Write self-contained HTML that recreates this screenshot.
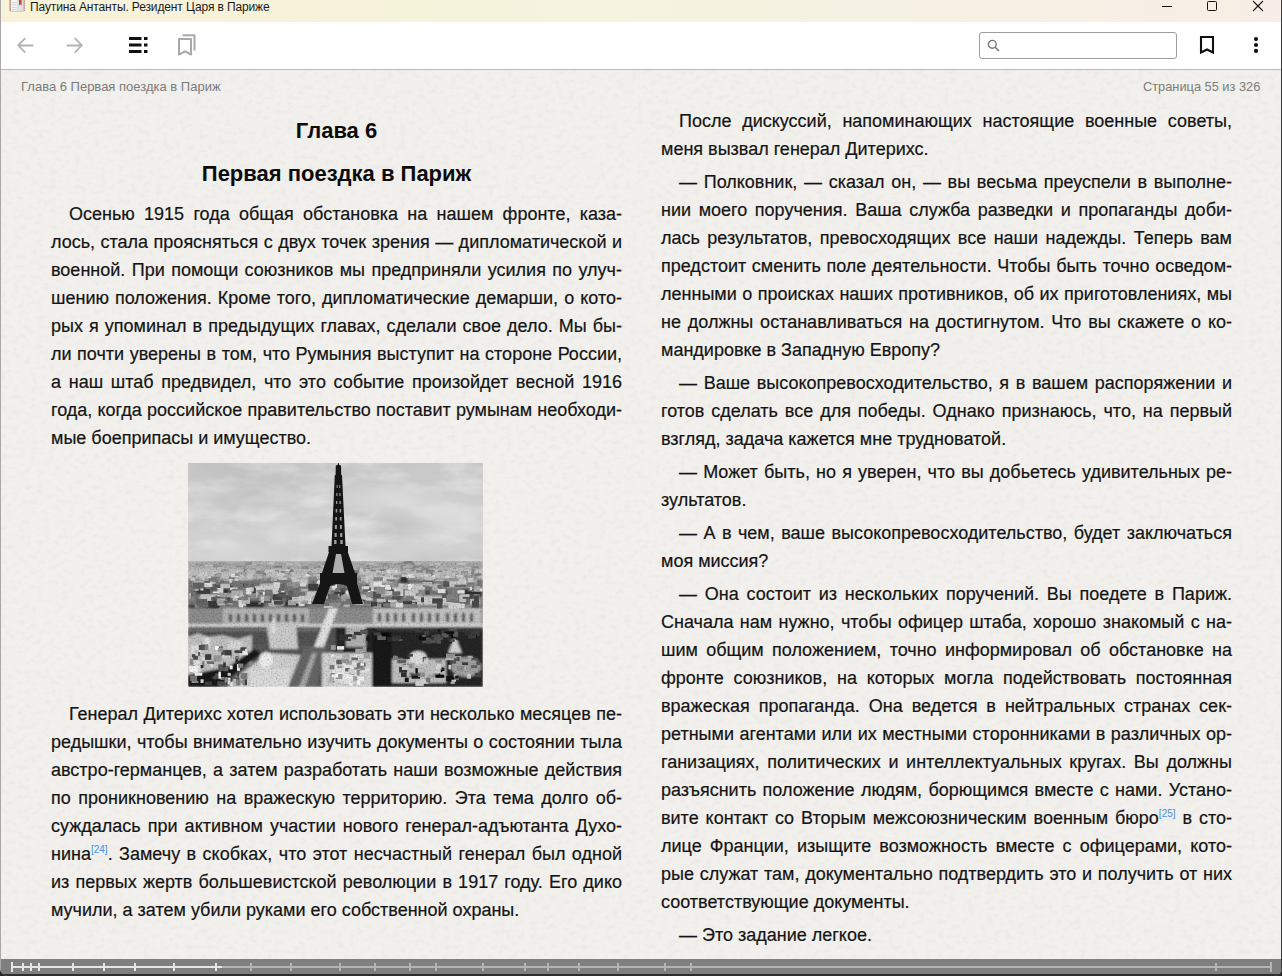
<!DOCTYPE html>
<html><head><meta charset="utf-8">
<style>
*{margin:0;padding:0;box-sizing:border-box}
html,body{width:1282px;height:976px;overflow:hidden;background:#2a2a2a}
body{position:relative;font-family:"Liberation Sans",sans-serif}
#win{position:absolute;left:0;top:0;width:1282px;height:976px;border-radius:0 0 8px 8px;overflow:hidden;background:#808080}
#title{position:absolute;left:0;top:0;width:1282px;height:22px;background:linear-gradient(to right,#f8f2d8 0%,#f6f3dc 35%,#f5f2e1 60%,#f7f0e5 85%,#f8eee7 100%)}
#title .t{position:absolute;left:30px;top:0;font-size:12px;letter-spacing:-0.13px;line-height:14px;color:#1a1a1a;white-space:pre}
#tool{position:absolute;left:0;top:22px;width:1282px;height:48px;background:#fff;border-bottom:1px solid #b9b9b9}
#content{position:absolute;left:0;top:70px;width:1282px;height:889px;background:#f2f0ec}
#bar{position:absolute;left:0;top:959px;width:1282px;height:15px;background:#7f7f7f}
#lb{position:absolute;left:0;top:0;width:1px;height:976px;background:#a9a9a9}
#rb{position:absolute;left:1281px;top:0;width:1px;height:976px;background:#3a3a3a}
.hdr{position:absolute;font-size:13px;line-height:15px;color:#7b7b7b;white-space:pre}
.l{position:absolute;font-size:18px;line-height:28px;height:28px;color:#141414;white-space:pre;-webkit-text-stroke:0.2px #141414}
.h{position:absolute;font-size:22px;font-weight:bold;line-height:28px;color:#0c0c0c;white-space:pre;left:51px;width:571px;text-align:center}
sup{font-size:10px;vertical-align:baseline;position:relative;top:-7.5px;color:#4a8ee0;-webkit-text-stroke:0}
svg{position:absolute;overflow:visible}
</style></head><body>
<div id="win">
<div id="title">
 <svg style="left:9px;top:0" width="17" height="13" viewBox="0 0 17 13">
  <path d="M0.5 -1 V10 Q0.5 12 2.5 12 H14 Q16 12 16 10 V-1Z" fill="#e9c2bc"/>
  <rect x="2" y="-1" width="6.5" height="12" fill="#f4f4f3"/>
  <rect x="8.5" y="-1" width="6" height="12" fill="#dfe1e1"/>
  <g fill="#c9cccc"><rect x="3" y="2" width="4.5" height="0.8"/><rect x="3" y="4.5" width="4.5" height="0.8"/><rect x="3" y="7" width="4.5" height="0.8"/><rect x="3" y="9.3" width="4.5" height="0.8"/></g>
  <path d="M10 -1 h2.6 v6.5 l-1.3 -1.2 l-1.3 1.2z" fill="#c4473b"/>
  <rect x="0.5" y="-1" width="1.5" height="12" fill="#c99a92"/>
  <rect x="14.5" y="-1" width="1.5" height="12" fill="#d2a59e"/>
 </svg>
 <div class="t">Паутина Антанты. Резидент Царя в Париже</div>
 <svg style="left:1162px;top:0" width="120" height="22">
  <line x1="0" y1="6.5" x2="10" y2="6.5" stroke="#111" stroke-width="1"/>
  <rect x="45.5" y="1.5" width="9" height="9" rx="1" fill="none" stroke="#111" stroke-width="1"/>
  <path d="M91 1 L101 11 M101 1 L91 11" stroke="#111" stroke-width="1.1"/>
 </svg>
</div>
<div id="tool">
 <svg style="left:17px;top:14.5px" width="17" height="17" viewBox="0 0 17 17">
  <path d="M16.3 8.5 H1.2 M8.3 1.2 L1.2 8.3 L8.3 15.6" fill="none" stroke="#b3b3b3" stroke-width="1.8"/>
 </svg>
 <svg style="left:65.5px;top:14.5px" width="17" height="17" viewBox="0 0 17 17">
  <path d="M0.7 8.5 H15.8 M8.7 1.2 L15.8 8.3 L8.7 15.6" fill="none" stroke="#b3b3b3" stroke-width="1.8"/>
 </svg>
 <svg style="left:129px;top:15px" width="20" height="17" viewBox="0 0 20 17">
  <rect x="0" y="0" width="12.5" height="3" fill="#111"/>
  <rect x="0" y="6.5" width="12.5" height="3" fill="#111"/>
  <rect x="0" y="13" width="12.5" height="3" fill="#111"/>
  <rect x="15" y="0" width="3.5" height="3" fill="#111"/>
  <rect x="15" y="6.5" width="3.5" height="3" fill="#111"/>
  <rect x="15" y="13" width="3.5" height="3" fill="#111"/>
 </svg>
 <svg style="left:177px;top:11px" width="22" height="23" viewBox="0 0 22 23">
  <path d="M2 6 H14 V21.5 L8 18.3 L2 21.5 Z" fill="none" stroke="#a9a9a9" stroke-width="2" stroke-linejoin="round"/>
  <path d="M5.5 2.2 H17.5 V17.5" fill="none" stroke="#a9a9a9" stroke-width="2" stroke-linejoin="round"/>
 </svg>
 <div style="position:absolute;left:979px;top:10px;width:198px;height:27px;border:1px solid #9d9d9d;border-radius:3px;background:#fff"></div>
 <svg style="left:987px;top:17px" width="16" height="16" viewBox="0 0 16 16">
  <circle cx="5.3" cy="5.3" r="3.9" fill="none" stroke="#777" stroke-width="1.4"/>
  <path d="M8.2 8.2 L12 12" stroke="#777" stroke-width="1.6"/>
 </svg>
 <svg style="left:1199px;top:13px" width="16" height="20" viewBox="0 0 16 20">
  <path d="M2 2 H14 V17.5 L8 14.5 L2 17.5 Z" fill="none" stroke="#111" stroke-width="2.1" stroke-linejoin="miter"/>
 </svg>
 <svg style="left:1251px;top:13px" width="10" height="22" viewBox="0 0 10 22">
  <circle cx="5" cy="4.1" r="2.1" fill="#111"/>
  <circle cx="5" cy="10" r="2.1" fill="#111"/>
  <circle cx="5" cy="15.9" r="2.1" fill="#111"/>
 </svg>
</div>
<div id="content"><svg style="left:0;top:0" width="1282" height="889">
 <filter id="paper" x="0" y="0" width="1" height="1">
  <feTurbulence type="fractalNoise" baseFrequency="0.16 0.2" numOctaves="2" seed="11"/>
  <feColorMatrix type="matrix" values="0 0 0 0 0.55  0 0 0 0 0.53  0 0 0 0 0.5  -2.4 0 0 0 1.28"/>
 </filter>
 <rect width="1282" height="889" filter="url(#paper)" opacity="0.14"/>
</svg></div>
<div class="hdr" style="left:21px;top:79px">Глава 6 Первая поездка в Париж</div>
<div class="hdr" style="left:1143px;top:79px;font-size:12.8px">Страница 55 из 326</div>
<div class="h" style="top:117px">Глава 6</div>
<div class="h" style="top:160px">Первая поездка в Париж</div>
<div class="l" style="left:69px;top:200px;word-spacing:4.258px">Осенью 1915 года общая обстановка на нашем фронте, каза-</div>
<div class="l" style="left:51px;top:228px;word-spacing:0.472px">лось, стала проясняться с двух точек зрения — дипломатической и</div>
<div class="l" style="left:51px;top:256px;word-spacing:1.424px">военной. При помощи союзников мы предприняли усилия по улуч-</div>
<div class="l" style="left:51px;top:284px;word-spacing:1.065px">шению положения. Кроме того, дипломатические демарши, о кото-</div>
<div class="l" style="left:51px;top:312px;word-spacing:1.067px">рых я упоминал в предыдущих главах, сделали свое дело. Мы бы-</div>
<div class="l" style="left:51px;top:340px;word-spacing:0.553px">ли почти уверены в том, что Румыния выступит на стороне России,</div>
<div class="l" style="left:51px;top:368px;word-spacing:2.700px">а наш штаб предвидел, что это событие произойдет весной 1916</div>
<div class="l" style="left:51px;top:396px;word-spacing:0.201px">года, когда российское правительство поставит румынам необходи-</div>
<div class="l" style="left:51px;top:424px">мые боеприпасы и имущество.</div>
<div class="l" style="left:69px;top:700px;word-spacing:0.458px">Генерал Дитерихс хотел использовать эти несколько месяцев пе-</div>
<div class="l" style="left:51px;top:728px;word-spacing:0.458px">редышки, чтобы внимательно изучить документы о состоянии тыла</div>
<div class="l" style="left:51px;top:756px;word-spacing:1.232px">австро-германцев, а затем разработать наши возможные действия</div>
<div class="l" style="left:51px;top:784px;word-spacing:2.539px">по проникновению на вражескую территорию. Эта тема долго об-</div>
<div class="l" style="left:51px;top:812px;word-spacing:2.076px">суждалась при активном участии нового генерал-адъютанта Духо-</div>
<div class="l" style="left:51px;top:840px;word-spacing:1.453px">нина<sup>[24]</sup>. Замечу в скобках, что этот несчастный генерал был одной</div>
<div class="l" style="left:51px;top:868px;word-spacing:1.170px">из первых жертв большевистской революции в 1917 году. Его дико</div>
<div class="l" style="left:51px;top:896px">мучили, а затем убили руками его собственной охраны.</div>
<div class="l" style="left:679px;top:107px;word-spacing:5.703px">После дискуссий, напоминающих настоящие военные советы,</div>
<div class="l" style="left:661px;top:135px">меня вызвал генерал Дитерихс.</div>
<div class="l" style="left:679px;top:168px;word-spacing:1.702px">— Полковник, — сказал он, — вы весьма преуспели в выполне-</div>
<div class="l" style="left:661px;top:196px;word-spacing:2.605px">нии моего поручения. Ваша служба разведки и пропаганды доби-</div>
<div class="l" style="left:661px;top:224px;word-spacing:2.422px">лась результатов, превосходящих все наши надежды. Теперь вам</div>
<div class="l" style="left:661px;top:252px;word-spacing:0.574px">предстоит сменить поле деятельности. Чтобы быть точно осведом-</div>
<div class="l" style="left:661px;top:280px;word-spacing:0.504px">ленными о происках наших противников, об их приготовлениях, мы</div>
<div class="l" style="left:661px;top:308px;word-spacing:1.811px">не должны останавливаться на достигнутом. Что вы скажете о ко-</div>
<div class="l" style="left:661px;top:336px">мандировке в Западную Европу?</div>
<div class="l" style="left:679px;top:369px;word-spacing:1.665px">— Ваше высокопревосходительство, я в вашем распоряжении и</div>
<div class="l" style="left:661px;top:397px;word-spacing:1.903px">готов сделать все для победы. Однако признаюсь, что, на первый</div>
<div class="l" style="left:661px;top:425px">взгляд, задача кажется мне трудноватой.</div>
<div class="l" style="left:679px;top:458px;word-spacing:1.159px">— Может быть, но я уверен, что вы добьетесь удивительных ре-</div>
<div class="l" style="left:661px;top:486px">зультатов.</div>
<div class="l" style="left:679px;top:519px;word-spacing:1.455px">— А в чем, ваше высокопревосходительство, будет заключаться</div>
<div class="l" style="left:661px;top:547px">моя миссия?</div>
<div class="l" style="left:679px;top:580px;word-spacing:2.755px">— Она состоит из нескольких поручений. Вы поедете в Париж.</div>
<div class="l" style="left:661px;top:608px;word-spacing:1.344px">Сначала нам нужно, чтобы офицер штаба, хорошо знакомый с на-</div>
<div class="l" style="left:661px;top:636px;word-spacing:3.295px">шим общим положением, точно информировал об обстановке на</div>
<div class="l" style="left:661px;top:664px;word-spacing:4.750px">фронте союзников, на которых могла подействовать постоянная</div>
<div class="l" style="left:661px;top:692px;word-spacing:3.978px">вражеская пропаганда. Она ведется в нейтральных странах сек-</div>
<div class="l" style="left:661px;top:720px;word-spacing:0.477px">ретными агентами или их местными сторонниками в различных ор-</div>
<div class="l" style="left:661px;top:748px;word-spacing:2.656px">ганизациях, политических и интеллектуальных кругах. Вы должны</div>
<div class="l" style="left:661px;top:776px;word-spacing:1.328px">разъяснить положение людям, борющимся вместе с нами. Устано-</div>
<div class="l" style="left:661px;top:804px;word-spacing:1.914px">вите контакт со Вторым межсоюзническим военным бюро<sup>[25]</sup> в сто-</div>
<div class="l" style="left:661px;top:832px;word-spacing:3.125px">лице Франции, изыщите возможность вместе с офицерами, кото-</div>
<div class="l" style="left:661px;top:860px;word-spacing:0.719px">рые служат там, документально подтвердить это и получить от них</div>
<div class="l" style="left:661px;top:888px">соответствующие документы.</div>
<div class="l" style="left:679px;top:921px">— Это задание легкое.</div>
<svg style="left:188px;top:463px" width="295" height="224" viewBox="0 0 295 224">
 <defs>
  <linearGradient id="sky" x1="0" y1="0" x2="0" y2="1">
   <stop offset="0" stop-color="#c8c8c8"/>
   <stop offset="0.45" stop-color="#d0d0d0"/>
   <stop offset="1" stop-color="#d2d2d2"/>
  </linearGradient>
  <radialGradient id="cloud" cx="0.5" cy="0.5" r="0.5">
   <stop offset="0" stop-color="#dadada" stop-opacity="1"/>
   <stop offset="1" stop-color="#dadada" stop-opacity="0"/>
  </radialGradient>
  <radialGradient id="cloudd" cx="0.5" cy="0.5" r="0.5">
   <stop offset="0" stop-color="#b4b4b4" stop-opacity="0.8"/>
   <stop offset="1" stop-color="#b4b4b4" stop-opacity="0"/>
  </radialGradient>
  <filter id="nz" x="0" y="0" width="1" height="1">
   <feTurbulence type="fractalNoise" baseFrequency="0.6" numOctaves="2" seed="7"/>
   <feColorMatrix type="matrix" values="0 0 0 0 0  0 0 0 0 0  0 0 0 0 0  0 0 0 -3 1.5"/>
   <feComposite in2="SourceGraphic" operator="in"/>
  </filter>
  <filter id="clouds" x="0" y="0" width="1" height="1">
   <feTurbulence type="fractalNoise" baseFrequency="0.018 0.045" numOctaves="4" seed="5"/>
   <feColorMatrix type="matrix" values="0 0 0 0 0.5  0 0 0 0 0.5  0 0 0 0 0.5  2.2 0 0 0 -0.95"/>
  </filter>
  <filter id="clouds2" x="0" y="0" width="1" height="1">
   <feTurbulence type="fractalNoise" baseFrequency="0.02 0.05" numOctaves="4" seed="9"/>
   <feColorMatrix type="matrix" values="0 0 0 0 1  0 0 0 0 1  0 0 0 0 1  2.4 0 0 0 -1.05"/>
  </filter>
  <filter id="contrast" x="0" y="0" width="1" height="1" color-interpolation-filters="sRGB">
   <feComponentTransfer><feFuncR type="linear" slope="1.2" intercept="-0.1"/><feFuncG type="linear" slope="1.2" intercept="-0.1"/><feFuncB type="linear" slope="1.2" intercept="-0.1"/></feComponentTransfer>
  </filter>
  <filter id="bl2" x="-5%" y="-5%" width="110%" height="110%"><feGaussianBlur stdDeviation="0.45"/></filter>
  <filter id="bl" x="-5%" y="-5%" width="110%" height="110%"><feGaussianBlur stdDeviation="0.8"/></filter>
  <clipPath id="imgclip"><rect width="295" height="224"/></clipPath>
 </defs>
 <g clip-path="url(#imgclip)">
 <rect width="295" height="100" fill="url(#sky)"/>
 <rect width="295" height="100" filter="url(#clouds)" opacity="0.45"/>
 <rect width="295" height="100" filter="url(#clouds2)" opacity="0.5"/>
 <ellipse cx="205" cy="35" rx="55" ry="18" fill="url(#cloud)"/>
 <ellipse cx="255" cy="55" rx="55" ry="22" fill="url(#cloud)"/>
 <ellipse cx="190" cy="70" rx="45" ry="10" fill="url(#cloudd)" opacity="0.6"/>
 <ellipse cx="60" cy="30" rx="80" ry="35" fill="url(#cloudd)" opacity="0.5"/>
 <ellipse cx="100" cy="70" rx="50" ry="14" fill="url(#cloud)" opacity="0.6"/>
 <ellipse cx="215" cy="62" rx="40" ry="12" fill="url(#cloudd)" opacity="0.5"/>
 <ellipse cx="40" cy="85" rx="50" ry="16" fill="url(#cloud)" opacity="0.7"/>
 <g filter="url(#contrast)">
 <g filter="url(#bl)">
 <rect y="98" width="295" height="10" fill="#a2a2a2"/>
 <rect y="106" width="295" height="12" fill="#b2b2b2"/>
 <rect y="116" width="295" height="31" fill="#767676"/>
 <g fill="#bdbdbd">
  <rect x="5" y="118" width="22" height="6"/><rect x="38" y="112" width="26" height="5"/><rect x="72" y="121" width="22" height="7"/>
  <rect x="104" y="114" width="16" height="8"/><rect x="176" y="113" width="32" height="7"/><rect x="222" y="121" width="30" height="6"/>
  <rect x="258" y="116" width="30" height="8"/><rect x="12" y="133" width="16" height="7"/><rect x="48" y="128" width="22" height="6"/>
  <rect x="228" y="133" width="36" height="9"/><rect x="118" y="128" width="12" height="10"/><rect x="168" y="132" width="18" height="9"/>
  <rect x="82" y="136" width="14" height="6"/><rect x="200" y="124" width="14" height="8"/><rect x="272" y="136" width="20" height="6"/>
 </g>
 <g fill="#3e3e3e">
  <rect x="30" y="124" width="12" height="9"/><rect x="96" y="134" width="22" height="10"/><rect x="190" y="138" width="28" height="7"/>
  <rect x="58" y="138" width="18" height="7"/><rect x="276" y="126" width="18" height="7"/><rect x="0" y="142" width="28" height="5"/>
  <rect x="130" y="118" width="8" height="20"/><rect x="212" y="112" width="8" height="8"/><rect x="8" y="126" width="14" height="5"/>
 </g>
 <rect x="56" y="103" width="2" height="10" fill="#555"/>
 <rect x="100" y="104" width="2" height="12" fill="#555"/>
 <rect x="284" y="104" width="2" height="14" fill="#555"/>
 <circle cx="220" cy="104.5" r="6" fill="none" stroke="#444" stroke-width="1.3"/>
 <!-- facades -->
 <rect x="0" y="145" width="295" height="19" fill="#8a8a8a"/>
 <rect x="35" y="145" width="86" height="17" fill="#ababab"/>
 <rect x="185" y="145" width="108" height="17" fill="#b6b6b6"/>
 <g fill="#555">
  <rect x="41" y="151" width="3" height="8"/><rect x="49" y="151" width="3" height="8"/><rect x="57" y="151" width="3" height="8"/><rect x="65" y="151" width="3" height="8"/><rect x="73" y="151" width="3" height="8"/><rect x="81" y="151" width="3" height="8"/><rect x="89" y="151" width="3" height="8"/><rect x="97" y="151" width="3" height="8"/><rect x="105" y="151" width="3" height="8"/><rect x="113" y="151" width="3" height="8"/>
  <rect x="190" y="150" width="3" height="9"/><rect x="198" y="150" width="3" height="9"/><rect x="206" y="150" width="3" height="9"/><rect x="214" y="150" width="3" height="9"/><rect x="224" y="150" width="3" height="9"/><rect x="232" y="150" width="3" height="9"/><rect x="240" y="150" width="3" height="9"/><rect x="248" y="150" width="3" height="9"/><rect x="258" y="150" width="3" height="9"/><rect x="266" y="150" width="3" height="9"/><rect x="274" y="150" width="3" height="9"/><rect x="282" y="150" width="3" height="9"/>
 </g>
 <rect x="0" y="161" width="295" height="3" fill="#c6c6c6"/>
 <!-- river & foreground base -->
 <rect x="0" y="164" width="295" height="17" fill="#5a5a5a"/>
 <rect x="0" y="166" width="130" height="2" fill="#7a7a7a"/>
 <rect x="148" y="164" width="147" height="60" fill="#353535"/>
 <rect x="0" y="181" width="148" height="43" fill="#5e5e5e"/>
 <!-- left pavilions -->
 <path d="M0 174 L10 170 L20 174 L34 172 L50 176 L64 172 L64 200 L40 212 L0 214Z" fill="#b4b4b4"/>
 <rect x="3" y="182" width="10" height="28" fill="#cdcdcd"/>
 <rect x="16" y="174" width="6" height="10" fill="#d0d0d0"/>
 <rect x="40" y="178" width="14" height="8" fill="#c6c6c6"/>
 <path d="M0 212 L40 204 L66 186 L74 190 L30 224 L0 224Z" fill="#2c2c2c"/>
 <path d="M78 160 L108 160 L110 186 L82 186Z" fill="#bdbdbd"/>
 <rect x="84" y="156" width="3" height="14" fill="#d2d2d2"/>
 <path d="M48 214 L80 190 L112 192 L112 224 L40 224Z" fill="#c0c0c0"/>
 <ellipse cx="78" cy="197" rx="7" ry="8" fill="#dadada"/>
 <rect x="62" y="206" width="40" height="18" fill="#cacaca"/>
 <!-- avenue / bridge -->
 <path d="M141 145 L150 145 L136 184 L126 184Z" fill="#d0d0d0"/>
 <path d="M116 184 L138 184 L128 224 L100 224Z" fill="#6a6a6a"/>
 <path d="M124 190 L129 190 L117 224 L111 224Z" fill="#a0a0a0"/>
 <!-- center pavilion -->
 <rect x="134" y="190" width="50" height="34" fill="#c2c2c2"/>
 <rect x="158" y="164" width="20" height="20" fill="#a8a8a8"/>
 <ellipse cx="158" cy="208" rx="14" ry="11" fill="#d4d4d4"/>
 <!-- right -->
 <rect x="184" y="164" width="20" height="60" fill="#2a2a2a"/>
 <rect x="204" y="196" width="54" height="24" fill="#b2b2b2"/>
 <ellipse cx="230" cy="195" rx="9" ry="7" fill="#cccccc"/>
 <path d="M267 172 L274 190 L260 190Z" fill="#c4c4c4"/>
 <ellipse cx="278" cy="204" rx="15" ry="10" fill="#9a9a9a"/>
 <rect x="188" y="164" width="107" height="4" fill="#4a4a4a"/>
 </g>
 <g filter="url(#bl2)">
  <rect x="79.5" y="100.8" width="5.8" height="1.1" fill="#ababab"/>
  <rect x="25.1" y="101.6" width="6.1" height="2.8" fill="#888888"/>
  <rect x="7.7" y="100.4" width="3.3" height="2.0" fill="#a7a7a7"/>
  <rect x="170.7" y="105.1" width="5.3" height="1.4" fill="#878787"/>
  <rect x="98.0" y="100.0" width="6.8" height="2.4" fill="#b6b6b6"/>
  <rect x="28.1" y="105.6" width="4.0" height="1.2" fill="#a5a5a5"/>
  <rect x="154.5" y="105.4" width="6.8" height="2.5" fill="#999999"/>
  <rect x="179.2" y="104.5" width="5.3" height="2.7" fill="#a3a3a3"/>
  <rect x="65.8" y="101.3" width="6.2" height="1.1" fill="#8a8a8a"/>
  <rect x="81.1" y="104.0" width="3.4" height="1.2" fill="#999999"/>
  <rect x="77.6" y="106.1" width="4.2" height="1.4" fill="#a7a7a7"/>
  <rect x="211.0" y="100.3" width="5.7" height="1.3" fill="#999999"/>
  <rect x="159.9" y="103.6" width="7.9" height="2.3" fill="#b1b1b1"/>
  <rect x="9.3" y="101.4" width="6.7" height="1.5" fill="#949494"/>
  <rect x="255.7" y="100.9" width="3.3" height="2.9" fill="#a7a7a7"/>
  <rect x="133.4" y="100.6" width="4.4" height="2.8" fill="#939393"/>
  <rect x="169.3" y="105.7" width="5.4" height="1.5" fill="#9a9a9a"/>
  <rect x="148.6" y="99.5" width="3.3" height="3.0" fill="#898989"/>
  <rect x="231.6" y="101.8" width="2.7" height="2.3" fill="#8a8a8a"/>
  <rect x="153.8" y="104.8" width="4.3" height="3.0" fill="#b2b2b2"/>
  <rect x="199.7" y="102.5" width="2.1" height="2.4" fill="#949494"/>
  <rect x="125.7" y="102.5" width="5.8" height="1.2" fill="#b6b6b6"/>
  <rect x="144.0" y="100.3" width="7.3" height="1.5" fill="#b4b4b4"/>
  <rect x="183.9" y="103.5" width="7.2" height="1.6" fill="#8e8e8e"/>
  <rect x="224.6" y="102.7" width="6.6" height="2.1" fill="#878787"/>
  <rect x="270.4" y="106.0" width="3.9" height="1.0" fill="#b0b0b0"/>
  <rect x="255.6" y="106.5" width="3.8" height="1.1" fill="#8b8b8b"/>
  <rect x="220.6" y="105.0" width="4.9" height="1.1" fill="#8d8d8d"/>
  <rect x="76.9" y="105.0" width="4.9" height="2.1" fill="#9c9c9c"/>
  <rect x="212.9" y="100.4" width="3.3" height="2.1" fill="#969696"/>
  <rect x="125.7" y="102.5" width="8.0" height="2.3" fill="#8d8d8d"/>
  <rect x="171.6" y="100.7" width="3.3" height="1.7" fill="#929292"/>
  <rect x="67.0" y="105.1" width="2.4" height="2.3" fill="#b1b1b1"/>
  <rect x="195.7" y="100.6" width="2.4" height="1.5" fill="#8d8d8d"/>
  <rect x="135.8" y="104.4" width="7.6" height="2.1" fill="#afafaf"/>
  <rect x="125.8" y="102.3" width="3.1" height="1.2" fill="#9e9e9e"/>
  <rect x="284.1" y="99.7" width="6.4" height="2.3" fill="#9b9b9b"/>
  <rect x="72.4" y="100.2" width="4.0" height="2.7" fill="#9d9d9d"/>
  <rect x="72.6" y="105.9" width="4.5" height="1.6" fill="#9d9d9d"/>
  <rect x="14.6" y="105.9" width="7.2" height="2.1" fill="#b0b0b0"/>
  <rect x="243.7" y="100.0" width="7.8" height="2.9" fill="#9f9f9f"/>
  <rect x="17.1" y="101.7" width="3.3" height="1.8" fill="#b8b8b8"/>
  <rect x="132.6" y="101.7" width="3.6" height="2.6" fill="#b6b6b6"/>
  <rect x="206.2" y="100.1" width="8.0" height="2.1" fill="#959595"/>
  <rect x="155.7" y="104.1" width="7.8" height="2.2" fill="#898989"/>
  <rect x="246.9" y="100.1" width="5.5" height="2.0" fill="#b7b7b7"/>
  <rect x="174.1" y="104.2" width="2.5" height="1.4" fill="#929292"/>
  <rect x="72.0" y="102.7" width="2.7" height="2.8" fill="#a5a5a5"/>
  <rect x="151.9" y="105.4" width="4.5" height="2.2" fill="#919191"/>
  <rect x="114.3" y="104.1" width="6.3" height="1.5" fill="#959595"/>
  <rect x="21.1" y="102.0" width="3.9" height="2.5" fill="#b8b8b8"/>
  <rect x="61.2" y="101.1" width="8.0" height="1.1" fill="#b5b5b5"/>
  <rect x="106.3" y="100.0" width="7.3" height="2.8" fill="#b0b0b0"/>
  <rect x="285.1" y="103.4" width="6.2" height="2.2" fill="#878787"/>
  <rect x="191.1" y="105.9" width="6.9" height="1.6" fill="#8d8d8d"/>
  <rect x="161.7" y="101.1" width="2.7" height="1.2" fill="#a5a5a5"/>
  <rect x="183.1" y="101.0" width="6.3" height="1.4" fill="#9f9f9f"/>
  <rect x="26.5" y="101.7" width="7.4" height="2.7" fill="#949494"/>
  <rect x="186.7" y="100.7" width="2.0" height="2.5" fill="#acacac"/>
  <rect x="2.8" y="99.5" width="5.3" height="1.9" fill="#b3b3b3"/>
  <rect x="240.0" y="103.0" width="7.4" height="2.1" fill="#8e8e8e"/>
  <rect x="262.7" y="104.9" width="2.8" height="1.6" fill="#b2b2b2"/>
  <rect x="71.8" y="99.8" width="7.4" height="1.4" fill="#aeaeae"/>
  <rect x="178.6" y="100.1" width="7.3" height="1.8" fill="#b5b5b5"/>
  <rect x="233.4" y="104.3" width="7.2" height="3.0" fill="#888888"/>
  <rect x="268.6" y="104.9" width="6.4" height="1.7" fill="#b2b2b2"/>
  <rect x="226.9" y="99.8" width="6.9" height="1.5" fill="#b2b2b2"/>
  <rect x="235.1" y="102.5" width="7.2" height="1.4" fill="#969696"/>
  <rect x="6.8" y="100.5" width="6.8" height="1.5" fill="#979797"/>
  <rect x="80.3" y="102.9" width="7.2" height="2.9" fill="#9a9a9a"/>
  <rect x="269.7" y="99.8" width="7.9" height="2.1" fill="#b7b7b7"/>
  <rect x="77.5" y="99.7" width="3.1" height="2.9" fill="#9c9c9c"/>
  <rect x="175.0" y="102.8" width="6.4" height="1.6" fill="#9a9a9a"/>
  <rect x="205.2" y="99.0" width="5.5" height="1.5" fill="#b5b5b5"/>
  <rect x="215.0" y="103.4" width="5.2" height="2.4" fill="#999999"/>
  <rect x="96.6" y="101.1" width="2.4" height="2.3" fill="#b1b1b1"/>
  <rect x="89.3" y="102.0" width="6.3" height="1.6" fill="#9b9b9b"/>
  <rect x="122.4" y="106.3" width="3.8" height="1.3" fill="#a8a8a8"/>
  <rect x="86.5" y="102.7" width="7.4" height="2.2" fill="#878787"/>
  <rect x="168.9" y="103.7" width="3.7" height="1.9" fill="#9e9e9e"/>
  <rect x="137.4" y="105.8" width="4.7" height="1.4" fill="#aeaeae"/>
  <rect x="150.5" y="104.0" width="3.0" height="1.2" fill="#979797"/>
  <rect x="193.8" y="100.5" width="6.9" height="2.5" fill="#909090"/>
  <rect x="139.1" y="105.4" width="2.1" height="1.5" fill="#8a8a8a"/>
  <rect x="56.5" y="103.7" width="4.5" height="2.3" fill="#9f9f9f"/>
  <rect x="1.6" y="104.0" width="3.5" height="2.3" fill="#adadad"/>
  <rect x="51.4" y="105.8" width="2.6" height="1.9" fill="#a0a0a0"/>
  <rect x="248.3" y="102.4" width="2.3" height="1.5" fill="#afafaf"/>
  <rect x="172.1" y="104.7" width="6.0" height="3.0" fill="#b3b3b3"/>
  <rect x="146.0" y="104.4" width="5.7" height="2.4" fill="#a2a2a2"/>
  <rect x="136.5" y="100.7" width="7.4" height="2.5" fill="#939393"/>
  <rect x="150.7" y="103.1" width="5.8" height="2.5" fill="#949494"/>
  <rect x="79.5" y="101.4" width="2.5" height="1.6" fill="#a2a2a2"/>
  <rect x="202.8" y="104.3" width="2.8" height="1.5" fill="#8a8a8a"/>
  <rect x="120.8" y="100.4" width="4.4" height="2.1" fill="#9c9c9c"/>
  <rect x="200.0" y="104.9" width="7.4" height="2.2" fill="#adadad"/>
  <rect x="102.3" y="105.0" width="4.3" height="1.0" fill="#b1b1b1"/>
  <rect x="214.7" y="102.9" width="7.7" height="1.8" fill="#a5a5a5"/>
  <rect x="127.1" y="99.2" width="3.3" height="1.4" fill="#979797"/>
  <rect x="47.7" y="102.4" width="6.1" height="1.8" fill="#8d8d8d"/>
  <rect x="114.0" y="103.5" width="5.7" height="1.1" fill="#888888"/>
  <rect x="133.5" y="99.4" width="5.9" height="1.3" fill="#999999"/>
  <rect x="222.1" y="101.8" width="3.3" height="1.7" fill="#acacac"/>
  <rect x="23.6" y="99.1" width="7.0" height="1.5" fill="#a1a1a1"/>
  <rect x="186.6" y="104.7" width="8.0" height="1.7" fill="#a7a7a7"/>
  <rect x="57.5" y="99.1" width="6.5" height="2.9" fill="#8e8e8e"/>
  <rect x="164.8" y="100.5" width="2.8" height="2.3" fill="#a9a9a9"/>
  <rect x="175.1" y="104.7" width="6.6" height="1.3" fill="#8c8c8c"/>
  <rect x="31.1" y="99.2" width="6.9" height="2.9" fill="#969696"/>
  <rect x="114.6" y="103.3" width="6.1" height="2.9" fill="#8a8a8a"/>
  <rect x="29.4" y="104.2" width="6.1" height="2.3" fill="#b1b1b1"/>
  <rect x="284.7" y="105.1" width="5.6" height="1.2" fill="#989898"/>
  <rect x="146.9" y="101.5" width="4.6" height="1.7" fill="#b1b1b1"/>
  <rect x="276.8" y="104.0" width="6.9" height="1.2" fill="#b0b0b0"/>
  <rect x="211.9" y="105.9" width="6.2" height="1.9" fill="#949494"/>
  <rect x="139.3" y="102.0" width="6.8" height="2.1" fill="#ababab"/>
  <rect x="242.1" y="99.5" width="3.6" height="2.7" fill="#b3b3b3"/>
  <rect x="177.9" y="101.7" width="3.5" height="1.9" fill="#888888"/>
  <rect x="61.1" y="105.1" width="7.1" height="1.4" fill="#989898"/>
  <rect x="79.5" y="99.1" width="7.3" height="2.4" fill="#b6b6b6"/>
  <rect x="142.8" y="114.1" width="2.7" height="3.3" fill="#b6b6b6"/>
  <rect x="228.2" y="107.0" width="7.2" height="2.7" fill="#8b8b8b"/>
  <rect x="167.2" y="111.6" width="7.5" height="2.3" fill="#a7a7a7"/>
  <rect x="95.8" y="113.5" width="5.4" height="3.4" fill="#909090"/>
  <rect x="56.0" y="107.5" width="4.0" height="1.8" fill="#a8a8a8"/>
  <rect x="62.1" y="111.8" width="8.1" height="2.0" fill="#b9b9b9"/>
  <rect x="80.7" y="107.1" width="9.8" height="2.8" fill="#898989"/>
  <rect x="4.1" y="112.4" width="3.8" height="1.9" fill="#909090"/>
  <rect x="198.9" y="107.4" width="9.8" height="2.9" fill="#c6c6c6"/>
  <rect x="165.9" y="110.8" width="5.9" height="3.7" fill="#9f9f9f"/>
  <rect x="274.3" y="111.9" width="3.5" height="1.6" fill="#c1c1c1"/>
  <rect x="182.4" y="106.7" width="5.2" height="1.7" fill="#858585"/>
  <rect x="286.7" y="107.4" width="6.5" height="2.3" fill="#bcbcbc"/>
  <rect x="65.0" y="111.5" width="6.9" height="3.5" fill="#a0a0a0"/>
  <rect x="286.6" y="109.2" width="5.5" height="3.7" fill="#afafaf"/>
  <rect x="273.0" y="108.2" width="6.9" height="3.4" fill="#8a8a8a"/>
  <rect x="50.0" y="106.9" width="7.3" height="1.9" fill="#787878"/>
  <rect x="84.3" y="108.5" width="5.6" height="3.0" fill="#b7b7b7"/>
  <rect x="197.5" y="116.5" width="7.6" height="2.6" fill="#bebebe"/>
  <rect x="268.9" y="110.6" width="7.0" height="3.2" fill="#a9a9a9"/>
  <rect x="237.9" y="106.7" width="7.2" height="3.8" fill="#868686"/>
  <rect x="165.4" y="109.1" width="4.5" height="3.4" fill="#838383"/>
  <rect x="271.0" y="111.4" width="7.5" height="3.2" fill="#a4a4a4"/>
  <rect x="126.3" y="110.0" width="2.6" height="1.6" fill="#8e8e8e"/>
  <rect x="244.3" y="111.8" width="2.7" height="3.9" fill="#cdcdcd"/>
  <rect x="76.8" y="106.4" width="10.0" height="3.2" fill="#bcbcbc"/>
  <rect x="265.0" y="108.0" width="5.8" height="3.1" fill="#acacac"/>
  <rect x="26.3" y="109.9" width="7.1" height="2.7" fill="#959595"/>
  <rect x="94.9" y="113.2" width="7.4" height="3.6" fill="#919191"/>
  <rect x="157.0" y="110.8" width="9.6" height="3.5" fill="#949494"/>
  <rect x="117.4" y="111.2" width="4.6" height="3.9" fill="#d0d0d0"/>
  <rect x="118.9" y="108.1" width="7.3" height="2.9" fill="#989898"/>
  <rect x="218.1" y="108.2" width="8.1" height="3.1" fill="#a9a9a9"/>
  <rect x="199.4" y="107.4" width="9.4" height="2.6" fill="#cfcfcf"/>
  <rect x="45.6" y="112.6" width="6.9" height="2.1" fill="#a9a9a9"/>
  <rect x="266.8" y="110.6" width="2.7" height="4.0" fill="#828282"/>
  <rect x="205.2" y="111.7" width="8.7" height="2.7" fill="#909090"/>
  <rect x="69.8" y="111.5" width="8.7" height="4.0" fill="#9a9a9a"/>
  <rect x="251.2" y="115.7" width="9.4" height="2.8" fill="#909090"/>
  <rect x="267.8" y="111.8" width="8.3" height="2.5" fill="#c1c1c1"/>
  <rect x="170.6" y="117.7" width="4.3" height="2.2" fill="#a4a4a4"/>
  <rect x="100.7" y="112.2" width="3.2" height="2.8" fill="#a8a8a8"/>
  <rect x="54.6" y="114.2" width="5.6" height="2.3" fill="#ababab"/>
  <rect x="12.7" y="113.9" width="3.9" height="3.4" fill="#b7b7b7"/>
  <rect x="190.2" y="115.5" width="8.5" height="2.5" fill="#d0d0d0"/>
  <rect x="145.2" y="113.3" width="6.0" height="1.6" fill="#c6c6c6"/>
  <rect x="150.4" y="111.2" width="9.0" height="2.6" fill="#b9b9b9"/>
  <rect x="44.7" y="111.1" width="5.3" height="3.1" fill="#cfcfcf"/>
  <rect x="188.6" y="115.2" width="4.7" height="3.2" fill="#c4c4c4"/>
  <rect x="90.6" y="114.3" width="8.9" height="2.5" fill="#bcbcbc"/>
  <rect x="19.6" y="113.8" width="9.0" height="1.6" fill="#cacaca"/>
  <rect x="123.7" y="107.0" width="10.0" height="3.4" fill="#b1b1b1"/>
  <rect x="198.5" y="116.3" width="9.0" height="2.6" fill="#7c7c7c"/>
  <rect x="107.4" y="107.7" width="8.4" height="2.2" fill="#a7a7a7"/>
  <rect x="49.0" y="106.8" width="6.5" height="3.5" fill="#c6c6c6"/>
  <rect x="262.9" y="107.7" width="7.0" height="2.1" fill="#a1a1a1"/>
  <rect x="2.7" y="115.5" width="4.0" height="2.1" fill="#c9c9c9"/>
  <rect x="127.0" y="110.2" width="7.4" height="1.9" fill="#acacac"/>
  <rect x="72.0" y="115.7" width="7.1" height="2.6" fill="#898989"/>
  <rect x="68.8" y="112.5" width="5.1" height="2.7" fill="#ababab"/>
  <rect x="278.8" y="113.7" width="9.9" height="2.2" fill="#909090"/>
  <rect x="214.8" y="106.5" width="6.5" height="3.2" fill="#aeaeae"/>
  <rect x="82.7" y="114.2" width="6.0" height="3.8" fill="#aeaeae"/>
  <rect x="180.2" y="113.4" width="4.8" height="3.1" fill="#b8b8b8"/>
  <rect x="180.8" y="115.4" width="7.3" height="3.6" fill="#b2b2b2"/>
  <rect x="168.4" y="114.3" width="4.5" height="2.6" fill="#808080"/>
  <rect x="51.0" y="107.4" width="4.4" height="3.4" fill="#a8a8a8"/>
  <rect x="260.6" y="115.3" width="9.8" height="2.8" fill="#8f8f8f"/>
  <rect x="231.0" y="114.4" width="8.6" height="2.7" fill="#969696"/>
  <rect x="41.1" y="115.8" width="2.9" height="3.9" fill="#c5c5c5"/>
  <rect x="277.8" y="114.1" width="7.8" height="3.9" fill="#989898"/>
  <rect x="153.8" y="111.7" width="8.3" height="1.5" fill="#b4b4b4"/>
  <rect x="236.5" y="116.4" width="7.4" height="3.0" fill="#818181"/>
  <rect x="257.4" y="113.0" width="3.9" height="1.6" fill="#cacaca"/>
  <rect x="239.9" y="117.2" width="3.8" height="1.7" fill="#939393"/>
  <rect x="274.2" y="109.7" width="5.3" height="1.8" fill="#a4a4a4"/>
  <rect x="39.6" y="110.7" width="2.8" height="3.7" fill="#b4b4b4"/>
  <rect x="120.3" y="113.5" width="7.9" height="3.9" fill="#858585"/>
  <rect x="141.8" y="111.0" width="5.3" height="1.7" fill="#cdcdcd"/>
  <rect x="129.8" y="117.0" width="2.3" height="2.4" fill="#c4c4c4"/>
  <rect x="159.1" y="116.5" width="2.8" height="3.2" fill="#989898"/>
  <rect x="35.4" y="116.2" width="5.2" height="2.0" fill="#a0a0a0"/>
  <rect x="171.8" y="106.2" width="7.3" height="3.1" fill="#bebebe"/>
  <rect x="164.3" y="106.8" width="3.9" height="1.8" fill="#bcbcbc"/>
  <rect x="253.4" y="109.9" width="3.7" height="2.0" fill="#858585"/>
  <rect x="245.3" y="107.8" width="9.2" height="1.5" fill="#838383"/>
  <rect x="192.4" y="106.3" width="4.0" height="1.9" fill="#797979"/>
  <rect x="92.8" y="108.1" width="8.3" height="2.1" fill="#7c7c7c"/>
  <rect x="214.1" y="111.3" width="7.9" height="2.8" fill="#bebebe"/>
  <rect x="145.6" y="117.6" width="6.1" height="1.8" fill="#7b7b7b"/>
  <rect x="149.5" y="110.7" width="8.3" height="3.7" fill="#cecece"/>
  <rect x="117.5" y="113.8" width="2.5" height="2.7" fill="#a4a4a4"/>
  <rect x="23.1" y="113.5" width="9.3" height="1.7" fill="#7d7d7d"/>
  <rect x="159.5" y="109.6" width="4.2" height="3.1" fill="#d1d1d1"/>
  <rect x="174.8" y="107.1" width="6.2" height="2.6" fill="#b7b7b7"/>
  <rect x="220.1" y="113.8" width="8.8" height="3.1" fill="#8b8b8b"/>
  <rect x="98.1" y="111.4" width="5.6" height="2.1" fill="#9d9d9d"/>
  <rect x="194.4" y="110.3" width="2.8" height="2.6" fill="#858585"/>
  <rect x="237.6" y="107.1" width="9.4" height="1.7" fill="#808080"/>
  <rect x="159.7" y="112.1" width="7.9" height="3.5" fill="#aaaaaa"/>
  <rect x="102.7" y="114.1" width="4.6" height="1.8" fill="#bbbbbb"/>
  <rect x="277.0" y="112.4" width="8.9" height="3.3" fill="#979797"/>
  <rect x="189.4" y="108.7" width="6.6" height="2.0" fill="#818181"/>
  <rect x="218.3" y="112.6" width="8.8" height="2.4" fill="#c0c0c0"/>
  <rect x="234.3" y="112.2" width="8.8" height="3.9" fill="#b1b1b1"/>
  <rect x="242.9" y="108.7" width="2.2" height="3.8" fill="#888888"/>
  <rect x="97.7" y="106.1" width="7.6" height="2.3" fill="#c6c6c6"/>
  <rect x="40.9" y="113.3" width="6.5" height="2.5" fill="#7a7a7a"/>
  <rect x="120.5" y="110.1" width="8.0" height="2.0" fill="#999999"/>
  <rect x="163.0" y="106.9" width="7.8" height="3.4" fill="#7c7c7c"/>
  <rect x="196.6" y="109.0" width="3.3" height="3.0" fill="#b3b3b3"/>
  <rect x="79.0" y="114.6" width="5.9" height="2.6" fill="#828282"/>
  <rect x="196.5" y="111.7" width="5.4" height="2.2" fill="#b4b4b4"/>
  <rect x="175.4" y="106.1" width="2.4" height="2.5" fill="#939393"/>
  <rect x="74.4" y="110.0" width="3.7" height="1.8" fill="#787878"/>
  <rect x="109.1" y="114.5" width="8.0" height="1.9" fill="#a5a5a5"/>
  <rect x="20.6" y="115.0" width="8.7" height="3.5" fill="#7b7b7b"/>
  <rect x="252.5" y="111.9" width="2.1" height="3.8" fill="#ababab"/>
  <rect x="33.1" y="106.2" width="7.7" height="2.5" fill="#959595"/>
  <rect x="238.4" y="116.1" width="8.4" height="3.0" fill="#7f7f7f"/>
  <rect x="168.6" y="112.2" width="8.8" height="2.1" fill="#9b9b9b"/>
  <rect x="96.8" y="108.0" width="4.5" height="2.3" fill="#a5a5a5"/>
  <rect x="264.6" y="109.9" width="2.9" height="2.8" fill="#b9b9b9"/>
  <rect x="67.7" y="107.5" width="8.6" height="3.5" fill="#898989"/>
  <rect x="188.9" y="107.9" width="6.8" height="3.4" fill="#bdbdbd"/>
  <rect x="219.6" y="110.8" width="6.0" height="3.4" fill="#cbcbcb"/>
  <rect x="180.2" y="115.4" width="6.5" height="3.1" fill="#b0b0b0"/>
  <rect x="129.0" y="109.7" width="3.2" height="1.7" fill="#909090"/>
  <rect x="90.8" y="111.1" width="2.4" height="2.8" fill="#7d7d7d"/>
  <rect x="247.5" y="116.5" width="8.7" height="1.7" fill="#afafaf"/>
  <rect x="160.2" y="115.0" width="6.1" height="2.7" fill="#c8c8c8"/>
  <rect x="188.6" y="109.4" width="5.6" height="3.5" fill="#a2a2a2"/>
  <rect x="30.2" y="117.1" width="3.2" height="1.7" fill="#969696"/>
  <rect x="49.6" y="108.8" width="7.7" height="2.8" fill="#9f9f9f"/>
  <rect x="46.0" y="110.2" width="5.5" height="2.8" fill="#919191"/>
  <rect x="173.2" y="115.2" width="5.3" height="2.3" fill="#b2b2b2"/>
  <rect x="198.4" y="109.5" width="2.5" height="1.7" fill="#b9b9b9"/>
  <rect x="251.3" y="109.4" width="7.3" height="3.8" fill="#acacac"/>
  <rect x="282.4" y="114.1" width="3.1" height="2.4" fill="#9b9b9b"/>
  <rect x="89.2" y="109.8" width="6.8" height="3.8" fill="#bfbfbf"/>
  <rect x="237.5" y="114.0" width="8.5" height="3.2" fill="#b5b5b5"/>
  <rect x="122.3" y="109.9" width="6.2" height="3.1" fill="#989898"/>
  <rect x="276.3" y="111.8" width="3.4" height="2.0" fill="#8c8c8c"/>
  <rect x="246.5" y="107.2" width="3.1" height="1.7" fill="#bdbdbd"/>
  <rect x="10.8" y="109.5" width="8.7" height="3.7" fill="#bcbcbc"/>
  <rect x="47.4" y="115.6" width="3.0" height="2.4" fill="#bdbdbd"/>
  <rect x="125.4" y="111.0" width="8.5" height="1.9" fill="#b4b4b4"/>
  <rect x="82.9" y="114.5" width="3.9" height="2.6" fill="#a0a0a0"/>
  <rect x="233.5" y="111.5" width="6.3" height="2.3" fill="#c3c3c3"/>
  <rect x="285.5" y="110.7" width="4.9" height="3.9" fill="#919191"/>
  <rect x="280.2" y="115.1" width="5.1" height="2.8" fill="#c0c0c0"/>
  <rect x="187.2" y="116.4" width="3.1" height="2.1" fill="#a9a9a9"/>
  <rect x="248.7" y="109.0" width="2.8" height="3.6" fill="#bcbcbc"/>
  <rect x="42.9" y="110.5" width="4.2" height="3.8" fill="#cdcdcd"/>
  <rect x="101.8" y="106.3" width="3.8" height="2.6" fill="#7c7c7c"/>
  <rect x="287.4" y="110.5" width="6.0" height="2.1" fill="#7a7a7a"/>
  <rect x="185.6" y="114.2" width="9.4" height="3.6" fill="#848484"/>
  <rect x="202.4" y="107.4" width="4.3" height="3.6" fill="#b7b7b7"/>
  <rect x="22.9" y="109.2" width="5.6" height="1.5" fill="#c3c3c3"/>
  <rect x="152.3" y="107.2" width="6.4" height="3.3" fill="#919191"/>
  <rect x="121.7" y="138.5" width="5.0" height="2.2" fill="#858585"/>
  <rect x="174.2" y="118.4" width="3.1" height="6.5" fill="#8e8e8e"/>
  <rect x="124.7" y="133.5" width="4.4" height="2.7" fill="#656565"/>
  <rect x="24.7" y="140.1" width="6.2" height="5.3" fill="#4b4b4b"/>
  <rect x="284.4" y="131.0" width="7.3" height="4.5" fill="#7b7b7b"/>
  <rect x="282.8" y="123.8" width="6.7" height="5.2" fill="#434343"/>
  <rect x="209.0" y="133.3" width="9.9" height="3.7" fill="#b4b4b4"/>
  <rect x="12.7" y="131.3" width="9.4" height="3.7" fill="#bbbbbb"/>
  <rect x="135.3" y="133.4" width="3.8" height="5.9" fill="#9f9f9f"/>
  <rect x="221.1" y="129.8" width="10.1" height="2.3" fill="#6d6d6d"/>
  <rect x="12.3" y="141.3" width="2.4" height="3.0" fill="#8e8e8e"/>
  <rect x="71.7" y="135.5" width="11.9" height="4.7" fill="#5d5d5d"/>
  <rect x="250.6" y="125.3" width="5.6" height="5.9" fill="#535353"/>
  <rect x="215.1" y="137.3" width="5.7" height="6.4" fill="#7a7a7a"/>
  <rect x="140.9" y="139.7" width="11.7" height="4.5" fill="#8e8e8e"/>
  <rect x="22.5" y="131.5" width="10.0" height="5.6" fill="#bcbcbc"/>
  <rect x="23.0" y="134.1" width="7.5" height="3.6" fill="#6e6e6e"/>
  <rect x="197.9" y="126.4" width="8.0" height="4.1" fill="#474747"/>
  <rect x="283.8" y="124.7" width="10.7" height="3.8" fill="#d4d4d4"/>
  <rect x="180.7" y="127.3" width="11.5" height="2.4" fill="#b9b9b9"/>
  <rect x="40.9" y="130.9" width="8.8" height="6.8" fill="#b6b6b6"/>
  <rect x="227.8" y="127.4" width="2.3" height="2.3" fill="#7a7a7a"/>
  <rect x="195.1" y="139.8" width="7.7" height="5.0" fill="#787878"/>
  <rect x="151.1" y="127.2" width="9.6" height="4.9" fill="#a2a2a2"/>
  <rect x="213.7" y="130.7" width="4.5" height="2.6" fill="#7b7b7b"/>
  <rect x="74.8" y="129.0" width="7.6" height="3.3" fill="#d6d6d6"/>
  <rect x="142.5" y="120.6" width="4.9" height="6.6" fill="#c0c0c0"/>
  <rect x="128.4" y="119.9" width="6.5" height="6.5" fill="#a7a7a7"/>
  <rect x="98.9" y="119.6" width="10.5" height="3.6" fill="#929292"/>
  <rect x="202.2" y="138.2" width="10.9" height="6.3" fill="#a0a0a0"/>
  <rect x="34.6" y="122.7" width="9.9" height="4.5" fill="#555555"/>
  <rect x="157.9" y="127.5" width="9.9" height="2.1" fill="#b9b9b9"/>
  <rect x="24.8" y="125.1" width="7.5" height="5.1" fill="#d6d6d6"/>
  <rect x="219.8" y="137.2" width="9.2" height="4.6" fill="#4c4c4c"/>
  <rect x="127.5" y="133.5" width="11.7" height="5.2" fill="#747474"/>
  <rect x="181.8" y="122.0" width="10.8" height="5.9" fill="#d1d1d1"/>
  <rect x="16.0" y="120.7" width="6.3" height="6.6" fill="#575757"/>
  <rect x="206.7" y="126.4" width="3.6" height="3.6" fill="#cecece"/>
  <rect x="71.2" y="131.8" width="10.9" height="6.2" fill="#939393"/>
  <rect x="155.6" y="130.3" width="3.3" height="3.5" fill="#5a5a5a"/>
  <rect x="186.8" y="136.2" width="11.4" height="2.8" fill="#9b9b9b"/>
  <rect x="234.8" y="118.7" width="10.4" height="4.8" fill="#474747"/>
  <rect x="186.6" y="135.7" width="8.4" height="4.9" fill="#7f7f7f"/>
  <rect x="179.8" y="124.8" width="8.4" height="4.5" fill="#d0d0d0"/>
  <rect x="197.4" y="124.5" width="6.8" height="6.0" fill="#4b4b4b"/>
  <rect x="141.6" y="122.9" width="2.6" height="4.2" fill="#9b9b9b"/>
  <rect x="212.8" y="137.3" width="5.1" height="5.6" fill="#d3d3d3"/>
  <rect x="163.8" y="125.7" width="3.3" height="3.9" fill="#868686"/>
  <rect x="28.1" y="125.2" width="4.7" height="3.2" fill="#7a7a7a"/>
  <rect x="248.2" y="122.0" width="8.2" height="3.2" fill="#727272"/>
  <rect x="219.2" y="130.2" width="7.8" height="3.6" fill="#8e8e8e"/>
  <rect x="6.7" y="141.1" width="7.0" height="3.5" fill="#8c8c8c"/>
  <rect x="100.0" y="119.3" width="11.7" height="3.1" fill="#8b8b8b"/>
  <rect x="133.7" y="130.2" width="10.8" height="5.3" fill="#c0c0c0"/>
  <rect x="210.0" y="134.5" width="6.3" height="6.4" fill="#777777"/>
  <rect x="56.3" y="130.8" width="6.0" height="4.9" fill="#4c4c4c"/>
  <rect x="80.5" y="139.9" width="7.0" height="5.8" fill="#a7a7a7"/>
  <rect x="114.9" y="134.8" width="3.2" height="6.9" fill="#737373"/>
  <rect x="56.5" y="129.3" width="11.4" height="5.8" fill="#8c8c8c"/>
  <rect x="97.4" y="130.0" width="2.5" height="2.7" fill="#858585"/>
  <rect x="94.1" y="132.4" width="8.1" height="4.6" fill="#595959"/>
  <rect x="84.7" y="125.5" width="11.9" height="5.7" fill="#bdbdbd"/>
  <rect x="86.2" y="136.3" width="7.3" height="5.5" fill="#787878"/>
  <rect x="167.1" y="134.8" width="8.7" height="6.9" fill="#adadad"/>
  <rect x="135.8" y="143.0" width="8.9" height="2.1" fill="#b6b6b6"/>
  <rect x="205.8" y="131.5" width="9.8" height="4.9" fill="#5a5a5a"/>
  <rect x="241.2" y="121.4" width="8.3" height="5.1" fill="#a7a7a7"/>
  <rect x="32.2" y="118.4" width="2.3" height="6.7" fill="#707070"/>
  <rect x="119.6" y="135.5" width="3.5" height="5.5" fill="#cbcbcb"/>
  <rect x="17.7" y="121.1" width="10.7" height="5.7" fill="#606060"/>
  <rect x="152.3" y="125.1" width="5.3" height="5.3" fill="#5a5a5a"/>
  <rect x="100.6" y="136.8" width="11.1" height="3.7" fill="#adadad"/>
  <rect x="174.8" y="122.3" width="8.4" height="5.5" fill="#656565"/>
  <rect x="279.6" y="125.4" width="7.6" height="3.1" fill="#6c6c6c"/>
  <rect x="92.2" y="125.8" width="4.1" height="5.5" fill="#cdcdcd"/>
  <rect x="34.7" y="134.7" width="10.0" height="3.4" fill="#797979"/>
  <rect x="270.3" y="135.6" width="11.8" height="6.1" fill="#6c6c6c"/>
  <rect x="100.5" y="127.9" width="4.9" height="5.6" fill="#676767"/>
  <rect x="155.2" y="141.3" width="6.8" height="3.0" fill="#a9a9a9"/>
  <rect x="171.1" y="123.6" width="3.4" height="5.1" fill="#a5a5a5"/>
  <rect x="15.1" y="127.4" width="7.3" height="5.2" fill="#acacac"/>
  <rect x="1.5" y="130.2" width="3.0" height="5.9" fill="#cccccc"/>
  <rect x="253.8" y="128.2" width="6.1" height="6.7" fill="#5e5e5e"/>
  <rect x="183.0" y="140.1" width="11.6" height="3.6" fill="#4e4e4e"/>
  <rect x="207.7" y="139.8" width="7.7" height="4.7" fill="#c9c9c9"/>
  <rect x="51.2" y="137.9" width="3.8" height="6.4" fill="#d6d6d6"/>
  <rect x="270.7" y="140.6" width="6.0" height="4.5" fill="#cbcbcb"/>
  <rect x="161.4" y="120.8" width="10.8" height="2.0" fill="#d4d4d4"/>
  <rect x="157.6" y="128.4" width="4.8" height="6.9" fill="#cdcdcd"/>
  <rect x="54.9" y="120.7" width="10.5" height="4.3" fill="#595959"/>
  <rect x="53.7" y="136.2" width="6.6" height="3.3" fill="#b7b7b7"/>
  <rect x="50.4" y="137.0" width="7.7" height="5.8" fill="#c7c7c7"/>
  <rect x="24.7" y="133.7" width="10.3" height="4.6" fill="#5c5c5c"/>
  <rect x="72.3" y="124.4" width="3.4" height="3.6" fill="#646464"/>
  <rect x="86.2" y="133.3" width="9.5" height="6.8" fill="#424242"/>
  <rect x="17.8" y="120.7" width="8.5" height="5.5" fill="#6f6f6f"/>
  <rect x="258.6" y="134.5" width="6.1" height="4.5" fill="#6f6f6f"/>
  <rect x="86.1" y="131.2" width="3.2" height="6.6" fill="#616161"/>
  <rect x="218.1" y="133.3" width="3.3" height="2.8" fill="#7f7f7f"/>
  <rect x="154.5" y="133.7" width="7.5" height="4.4" fill="#616161"/>
  <rect x="253.7" y="119.8" width="4.5" height="5.8" fill="#848484"/>
  <rect x="161.3" y="119.6" width="9.0" height="2.4" fill="#939393"/>
  <rect x="43.1" y="125.6" width="7.1" height="4.9" fill="#8f8f8f"/>
  <rect x="170.2" y="120.3" width="3.2" height="3.0" fill="#8d8d8d"/>
  <rect x="146.2" y="128.8" width="10.1" height="4.3" fill="#494949"/>
  <rect x="208.6" y="126.7" width="6.6" height="6.0" fill="#bbbbbb"/>
  <rect x="12.9" y="126.0" width="9.5" height="4.9" fill="#4a4a4a"/>
  <rect x="19.5" y="137.9" width="11.9" height="6.7" fill="#454545"/>
  <rect x="221.3" y="139.7" width="6.1" height="5.8" fill="#a1a1a1"/>
  <rect x="110.5" y="136.3" width="6.2" height="7.0" fill="#c9c9c9"/>
  <rect x="191.4" y="130.2" width="5.8" height="5.4" fill="#a3a3a3"/>
  <rect x="155.5" y="131.3" width="5.5" height="2.9" fill="#aeaeae"/>
  <rect x="6.6" y="125.8" width="4.2" height="2.0" fill="#a6a6a6"/>
  <rect x="236.8" y="123.8" width="7.4" height="4.7" fill="#747474"/>
  <rect x="210.4" y="120.4" width="4.8" height="6.7" fill="#bababa"/>
  <rect x="255.2" y="118.3" width="6.2" height="5.8" fill="#5f5f5f"/>
  <rect x="174.5" y="136.2" width="3.0" height="2.2" fill="#484848"/>
  <rect x="66.9" y="123.2" width="9.4" height="4.0" fill="#c2c2c2"/>
  <rect x="84.6" y="137.2" width="2.6" height="4.5" fill="#aeaeae"/>
  <rect x="194.9" y="125.4" width="5.2" height="5.0" fill="#6e6e6e"/>
  <rect x="64.4" y="124.8" width="3.4" height="5.3" fill="#4a4a4a"/>
  <rect x="258.4" y="131.5" width="11.5" height="6.4" fill="#818181"/>
  <rect x="271.2" y="132.2" width="7.0" height="6.9" fill="#b6b6b6"/>
  <rect x="43.2" y="127.0" width="5.2" height="4.1" fill="#b2b2b2"/>
  <rect x="86.7" y="133.4" width="6.7" height="6.2" fill="#b9b9b9"/>
  <rect x="274.7" y="130.9" width="11.1" height="4.8" fill="#555555"/>
  <rect x="187.9" y="141.0" width="4.4" height="3.0" fill="#c0c0c0"/>
  <rect x="55.6" y="124.0" width="2.9" height="5.6" fill="#a6a6a6"/>
  <rect x="54.0" y="134.5" width="8.0" height="6.4" fill="#adadad"/>
  <rect x="249.9" y="125.9" width="7.6" height="4.4" fill="#d0d0d0"/>
  <rect x="281.7" y="120.5" width="2.2" height="6.7" fill="#d6d6d6"/>
  <rect x="174.2" y="123.1" width="6.8" height="3.2" fill="#cacaca"/>
  <rect x="109.4" y="129.8" width="7.5" height="5.9" fill="#767676"/>
  <rect x="144.4" y="120.3" width="4.6" height="4.6" fill="#d4d4d4"/>
  <rect x="263.6" y="126.1" width="6.7" height="6.2" fill="#7f7f7f"/>
  <rect x="41.9" y="124.5" width="7.6" height="3.1" fill="#cdcdcd"/>
  <rect x="43.8" y="125.9" width="7.8" height="4.1" fill="#797979"/>
  <rect x="186.3" y="134.1" width="10.3" height="4.5" fill="#676767"/>
  <rect x="182.7" y="128.4" width="10.2" height="6.8" fill="#5a5a5a"/>
  <rect x="205.3" y="130.3" width="9.9" height="2.8" fill="#cacaca"/>
  <rect x="16.9" y="118.8" width="7.4" height="5.2" fill="#c0c0c0"/>
  <rect x="216.7" y="127.3" width="11.5" height="5.3" fill="#bfbfbf"/>
  <rect x="2.7" y="129.4" width="4.3" height="5.5" fill="#787878"/>
  <rect x="176.8" y="129.0" width="8.2" height="5.3" fill="#8a8a8a"/>
  <rect x="3.5" y="130.3" width="2.1" height="4.8" fill="#6a6a6a"/>
  <rect x="230.3" y="135.5" width="11.8" height="2.1" fill="#b9b9b9"/>
  <rect x="27.3" y="121.8" width="11.1" height="2.5" fill="#5d5d5d"/>
  <rect x="76.9" y="126.7" width="7.3" height="6.1" fill="#787878"/>
  <rect x="286.1" y="123.2" width="6.1" height="4.8" fill="#a7a7a7"/>
  <rect x="244.2" y="135.3" width="10.5" height="5.3" fill="#4f4f4f"/>
  <rect x="16.2" y="118.2" width="5.8" height="4.8" fill="#5a5a5a"/>
  <rect x="225.9" y="131.5" width="7.0" height="4.2" fill="#c1c1c1"/>
  <rect x="12.4" y="122.9" width="3.0" height="4.6" fill="#c3c3c3"/>
  <rect x="13.2" y="119.8" width="10.9" height="4.4" fill="#cbcbcb"/>
  <rect x="9.3" y="139.5" width="11.0" height="4.8" fill="#707070"/>
  <rect x="213.2" y="134.4" width="11.6" height="4.9" fill="#7c7c7c"/>
  <rect x="70.3" y="139.0" width="2.8" height="2.8" fill="#7b7b7b"/>
  <rect x="214.6" y="121.4" width="11.0" height="3.7" fill="#d5d5d5"/>
  <rect x="278.4" y="119.3" width="9.2" height="4.5" fill="#828282"/>
  <rect x="218.9" y="141.2" width="10.4" height="3.7" fill="#7c7c7c"/>
  <rect x="78.0" y="143.7" width="9.7" height="2.1" fill="#8a8a8a"/>
  <rect x="125.0" y="132.5" width="5.6" height="6.7" fill="#a4a4a4"/>
  <rect x="233.1" y="134.3" width="2.9" height="5.1" fill="#4d4d4d"/>
  <rect x="184.8" y="134.6" width="3.5" height="5.6" fill="#707070"/>
  <rect x="90.0" y="127.3" width="3.1" height="2.0" fill="#696969"/>
  <rect x="130.9" y="131.9" width="3.3" height="2.9" fill="#7e7e7e"/>
  <rect x="27.2" y="132.5" width="2.3" height="3.8" fill="#717171"/>
  <rect x="112.1" y="120.1" width="5.9" height="3.5" fill="#c8c8c8"/>
  <rect x="162.4" y="121.6" width="11.1" height="6.9" fill="#7a7a7a"/>
  <rect x="143.8" y="119.5" width="3.4" height="3.5" fill="#828282"/>
  <rect x="22.2" y="123.9" width="6.2" height="4.4" fill="#656565"/>
  <rect x="56.1" y="120.5" width="8.3" height="5.0" fill="#6e6e6e"/>
  <rect x="175.8" y="137.6" width="11.5" height="3.7" fill="#727272"/>
  <rect x="249.0" y="139.4" width="5.3" height="6.1" fill="#555555"/>
  <rect x="58.2" y="124.7" width="5.2" height="6.7" fill="#d1d1d1"/>
  <rect x="196.9" y="130.1" width="11.7" height="3.5" fill="#979797"/>
  <rect x="237.3" y="127.5" width="4.4" height="3.9" fill="#525252"/>
  <rect x="156.8" y="133.7" width="7.6" height="5.0" fill="#939393"/>
  <rect x="200.8" y="128.4" width="11.5" height="4.3" fill="#6c6c6c"/>
  <rect x="227.6" y="127.0" width="8.9" height="6.1" fill="#8b8b8b"/>
  <rect x="188.8" y="135.7" width="8.3" height="3.2" fill="#b7b7b7"/>
  <rect x="140.1" y="126.4" width="2.7" height="7.0" fill="#8c8c8c"/>
  <rect x="154.3" y="135.8" width="11.2" height="5.5" fill="#767676"/>
  <rect x="181.3" y="120.0" width="11.0" height="4.7" fill="#b4b4b4"/>
  <rect x="185.3" y="119.1" width="8.6" height="3.8" fill="#d4d4d4"/>
  <rect x="215.4" y="141.2" width="8.8" height="4.0" fill="#818181"/>
  <rect x="149.6" y="130.8" width="2.1" height="3.3" fill="#989898"/>
  <rect x="112.4" y="136.4" width="7.8" height="4.2" fill="#999999"/>
  <rect x="7.1" y="120.5" width="7.0" height="3.7" fill="#7f7f7f"/>
  <rect x="266.6" y="121.6" width="11.6" height="2.6" fill="#6f6f6f"/>
  <rect x="139.3" y="129.9" width="6.6" height="3.0" fill="#828282"/>
  <rect x="85.9" y="137.8" width="9.0" height="3.6" fill="#525252"/>
  <rect x="192.7" y="121.7" width="10.5" height="5.2" fill="#d4d4d4"/>
  <rect x="46.5" y="132.1" width="4.4" height="2.9" fill="#d0d0d0"/>
  <rect x="53.6" y="133.4" width="4.3" height="4.0" fill="#818181"/>
  <rect x="57.8" y="131.6" width="2.3" height="5.1" fill="#7b7b7b"/>
  <rect x="215.1" y="138.2" width="9.0" height="3.0" fill="#4a4a4a"/>
  <rect x="54.6" y="125.1" width="3.0" height="6.4" fill="#858585"/>
  <rect x="153.2" y="131.9" width="4.6" height="6.3" fill="#9a9a9a"/>
  <rect x="99.8" y="137.5" width="8.1" height="4.9" fill="#9d9d9d"/>
  <rect x="84.7" y="131.8" width="10.1" height="5.5" fill="#4d4d4d"/>
  <rect x="89.1" y="122.7" width="3.3" height="2.6" fill="#a9a9a9"/>
  <rect x="39.7" y="127.2" width="7.1" height="4.1" fill="#5c5c5c"/>
  <rect x="185.0" y="140.5" width="8.4" height="5.5" fill="#949494"/>
  <rect x="90.6" y="129.4" width="6.9" height="2.7" fill="#494949"/>
  <rect x="39.5" y="139.2" width="5.6" height="2.0" fill="#d1d1d1"/>
  <rect x="197.2" y="127.8" width="7.1" height="4.5" fill="#bebebe"/>
  <rect x="8.9" y="137.5" width="6.9" height="2.4" fill="#6c6c6c"/>
  <rect x="48.8" y="128.7" width="4.7" height="4.7" fill="#b0b0b0"/>
  <rect x="32.3" y="120.7" width="9.7" height="4.7" fill="#b5b5b5"/>
  <rect x="234.3" y="119.0" width="10.2" height="3.8" fill="#acacac"/>
  <rect x="29.4" y="135.5" width="7.5" height="6.9" fill="#b1b1b1"/>
  <rect x="130.4" y="125.3" width="5.0" height="7.0" fill="#bbbbbb"/>
  <rect x="223.9" y="123.0" width="6.4" height="7.0" fill="#bababa"/>
  <rect x="204.1" y="133.3" width="7.9" height="3.8" fill="#595959"/>
  <rect x="60.3" y="119.5" width="3.4" height="3.0" fill="#757575"/>
  <rect x="93.9" y="134.4" width="4.8" height="4.7" fill="#6c6c6c"/>
  <rect x="286.1" y="132.7" width="4.7" height="6.3" fill="#4f4f4f"/>
  <rect x="260.4" y="139.9" width="11.6" height="5.9" fill="#c3c3c3"/>
  <rect x="72.8" y="133.4" width="3.3" height="6.3" fill="#bdbdbd"/>
  <rect x="139.7" y="131.1" width="9.6" height="5.4" fill="#696969"/>
  <rect x="183.0" y="138.9" width="6.1" height="4.3" fill="#4e4e4e"/>
  <rect x="269.5" y="127.1" width="7.2" height="3.4" fill="#cfcfcf"/>
  <rect x="224.3" y="137.0" width="5.3" height="2.0" fill="#aeaeae"/>
  <rect x="103.3" y="119.4" width="6.6" height="5.3" fill="#919191"/>
  <rect x="61.6" y="124.4" width="4.2" height="4.1" fill="#bdbdbd"/>
  <rect x="164.0" y="129.2" width="5.4" height="4.9" fill="#747474"/>
  <rect x="28.5" y="138.2" width="8.8" height="2.2" fill="#858585"/>
  <rect x="128.7" y="118.0" width="3.2" height="6.3" fill="#d0d0d0"/>
  <rect x="38.4" y="132.7" width="4.0" height="5.4" fill="#585858"/>
  <rect x="185.7" y="124.2" width="11.3" height="3.4" fill="#787878"/>
  <rect x="112.5" y="125.7" width="11.0" height="2.8" fill="#a9a9a9"/>
  <rect x="204.5" y="118.0" width="4.3" height="5.3" fill="#888888"/>
  <rect x="198.3" y="118.2" width="3.3" height="3.1" fill="#a9a9a9"/>
  <rect x="120.3" y="120.8" width="10.2" height="6.9" fill="#4b4b4b"/>
  <rect x="29.6" y="125.0" width="5.8" height="5.7" fill="#c5c5c5"/>
  <rect x="219.6" y="120.9" width="3.4" height="5.9" fill="#d5d5d5"/>
  <rect x="2.5" y="133.2" width="3.4" height="4.7" fill="#838383"/>
  <rect x="43.3" y="127.4" width="9.2" height="5.1" fill="#a7a7a7"/>
  <rect x="28.6" y="137.2" width="10.6" height="2.4" fill="#999999"/>
  <rect x="90.9" y="121.0" width="5.8" height="6.8" fill="#6a6a6a"/>
  <rect x="175.3" y="132.1" width="2.8" height="4.8" fill="#b5b5b5"/>
  <rect x="188.4" y="124.6" width="8.9" height="6.2" fill="#8e8e8e"/>
  <rect x="85.1" y="119.2" width="7.1" height="5.7" fill="#c7c7c7"/>
  <rect x="32.0" y="129.8" width="11.5" height="4.5" fill="#9a9a9a"/>
  <rect x="283.9" y="137.7" width="7.3" height="6.9" fill="#545454"/>
  <rect x="103.9" y="133.8" width="10.6" height="4.8" fill="#b3b3b3"/>
  <rect x="4.7" y="119.5" width="11.5" height="5.9" fill="#686868"/>
  <rect x="230.9" y="131.0" width="2.4" height="2.3" fill="#9f9f9f"/>
  <rect x="202.1" y="120.0" width="7.0" height="4.1" fill="#919191"/>
  <rect x="88.9" y="130.6" width="8.2" height="3.4" fill="#5f5f5f"/>
  <rect x="111.3" y="132.8" width="10.1" height="4.7" fill="#bebebe"/>
  <rect x="200.0" y="136.7" width="8.8" height="2.3" fill="#bfbfbf"/>
  <rect x="127.1" y="129.6" width="2.6" height="2.4" fill="#9c9c9c"/>
  <rect x="214.7" y="120.7" width="5.1" height="5.7" fill="#ababab"/>
  <rect x="272.5" y="131.2" width="9.0" height="2.8" fill="#b6b6b6"/>
  <rect x="36.3" y="137.7" width="9.2" height="2.8" fill="#696969"/>
  <rect x="8.3" y="135.9" width="10.9" height="5.9" fill="#696969"/>
  <rect x="168.6" y="119.7" width="2.6" height="5.6" fill="#858585"/>
  <rect x="164.1" y="126.6" width="5.6" height="4.5" fill="#676767"/>
  <rect x="41.5" y="189.7" width="2.6" height="4.9" fill="#979797"/>
  <rect x="14.1" y="198.3" width="2.3" height="6.3" fill="#808080"/>
  <rect x="49.0" y="201.1" width="2.9" height="6.7" fill="#e0e0e0"/>
  <rect x="17.2" y="197.2" width="6.4" height="4.1" fill="#bdbdbd"/>
  <rect x="21.0" y="201.4" width="3.6" height="2.4" fill="#dedede"/>
  <rect x="55.9" y="216.3" width="3.1" height="6.0" fill="#484848"/>
  <rect x="46.6" y="194.0" width="4.8" height="3.4" fill="#9f9f9f"/>
  <rect x="32.7" y="193.2" width="2.0" height="3.0" fill="#acacac"/>
  <rect x="27.2" y="210.4" width="4.8" height="5.0" fill="#5f5f5f"/>
  <rect x="12.9" y="181.2" width="7.4" height="5.8" fill="#858585"/>
  <rect x="47.5" y="215.4" width="3.4" height="3.7" fill="#e7e7e7"/>
  <rect x="49.2" y="208.4" width="2.0" height="5.3" fill="#4e4e4e"/>
  <rect x="27.0" y="183.4" width="5.2" height="3.2" fill="#efefef"/>
  <rect x="49.5" y="217.4" width="6.3" height="2.5" fill="#999999"/>
  <rect x="52.4" y="184.3" width="6.2" height="3.9" fill="#4d4d4d"/>
  <rect x="4.3" y="202.0" width="2.8" height="6.1" fill="#8a8a8a"/>
  <rect x="13.6" y="193.5" width="7.8" height="3.2" fill="#cccccc"/>
  <rect x="17.1" y="191.2" width="6.2" height="5.7" fill="#494949"/>
  <rect x="33.2" y="186.8" width="3.2" height="5.9" fill="#595959"/>
  <rect x="29.6" y="218.6" width="4.8" height="4.0" fill="#616161"/>
  <rect x="6.7" y="187.3" width="3.8" height="3.3" fill="#b7b7b7"/>
  <rect x="2.1" y="212.4" width="7.0" height="5.5" fill="#777777"/>
  <rect x="20.4" y="201.4" width="2.5" height="3.2" fill="#b5b5b5"/>
  <rect x="1.8" y="195.6" width="3.6" height="7.0" fill="#8d8d8d"/>
  <rect x="24.7" y="213.0" width="6.5" height="3.2" fill="#555555"/>
  <rect x="56.9" y="185.8" width="2.1" height="6.2" fill="#d0d0d0"/>
  <rect x="36.0" y="203.0" width="4.2" height="5.2" fill="#6a6a6a"/>
  <rect x="3.4" y="217.9" width="6.9" height="2.1" fill="#8b8b8b"/>
  <rect x="47.5" y="193.1" width="2.8" height="6.5" fill="#434343"/>
  <rect x="31.7" y="214.0" width="4.8" height="2.8" fill="#838383"/>
  <rect x="10.0" y="189.1" width="2.2" height="5.4" fill="#5d5d5d"/>
  <rect x="2.0" y="203.7" width="3.7" height="6.4" fill="#686868"/>
  <rect x="31.0" y="183.4" width="3.8" height="4.1" fill="#6e6e6e"/>
  <rect x="50.6" y="202.0" width="2.8" height="3.0" fill="#adadad"/>
  <rect x="52.6" y="210.0" width="6.8" height="6.0" fill="#7c7c7c"/>
  <rect x="50.0" y="200.4" width="5.3" height="4.4" fill="#818181"/>
  <rect x="12.5" y="216.3" width="3.1" height="3.6" fill="#c8c8c8"/>
  <rect x="30.5" y="208.6" width="2.4" height="7.0" fill="#efefef"/>
  <rect x="34.3" y="191.8" width="7.8" height="2.5" fill="#cecece"/>
  <rect x="52.3" y="189.9" width="7.5" height="2.3" fill="#d4d4d4"/>
  <rect x="44.7" y="214.2" width="6.8" height="3.8" fill="#5b5b5b"/>
  <rect x="38.0" y="214.8" width="5.6" height="6.0" fill="#414141"/>
  <rect x="30.3" y="201.4" width="6.2" height="6.7" fill="#5d5d5d"/>
  <rect x="25.6" y="192.3" width="7.9" height="6.4" fill="#949494"/>
  <rect x="12.6" y="202.0" width="2.5" height="3.2" fill="#3c3c3c"/>
  <rect x="6.8" y="209.7" width="7.5" height="3.0" fill="#e1e1e1"/>
  <rect x="1.2" y="204.1" width="7.1" height="3.6" fill="#e1e1e1"/>
  <rect x="45.9" y="216.3" width="6.6" height="6.2" fill="#7f7f7f"/>
  <rect x="5.3" y="192.8" width="7.7" height="4.0" fill="#545454"/>
  <rect x="45.2" y="215.8" width="2.9" height="6.7" fill="#b0b0b0"/>
  <rect x="39.5" y="214.6" width="3.0" height="6.8" fill="#c9c9c9"/>
  <rect x="9.9" y="192.7" width="3.3" height="4.9" fill="#b7b7b7"/>
  <rect x="54.3" y="216.4" width="2.8" height="5.6" fill="#828282"/>
  <rect x="1.7" y="202.8" width="8.0" height="6.8" fill="#e1e1e1"/>
  <rect x="29.5" y="218.4" width="7.8" height="3.1" fill="#555555"/>
  <rect x="52.6" y="187.7" width="6.5" height="3.2" fill="#dbdbdb"/>
  <rect x="36.7" y="214.2" width="2.5" height="5.5" fill="#8c8c8c"/>
  <rect x="3.8" y="191.2" width="3.6" height="3.2" fill="#4f4f4f"/>
  <rect x="42.5" y="218.9" width="2.0" height="3.9" fill="#dbdbdb"/>
  <rect x="30.1" y="185.0" width="5.0" height="3.9" fill="#929292"/>
  <rect x="36.3" y="187.1" width="7.2" height="5.3" fill="#494949"/>
  <rect x="16.9" y="218.6" width="7.1" height="3.5" fill="#494949"/>
  <rect x="41.7" y="202.4" width="3.0" height="3.9" fill="#dddddd"/>
  <rect x="35.2" y="199.4" width="2.6" height="5.0" fill="#414141"/>
  <rect x="46.6" y="187.3" width="7.7" height="2.8" fill="#4e4e4e"/>
  <rect x="39.6" y="209.9" width="3.2" height="2.9" fill="#bfbfbf"/>
  <rect x="13.4" y="183.0" width="3.6" height="3.4" fill="#a2a2a2"/>
  <rect x="19.1" y="198.2" width="7.0" height="2.8" fill="#717171"/>
  <rect x="10.8" y="182.0" width="6.0" height="5.0" fill="#5a5a5a"/>
  <rect x="47.5" y="193.5" width="3.8" height="2.4" fill="#838383"/>
  <rect x="141.6" y="201.9" width="4.9" height="4.6" fill="#7d7d7d"/>
  <rect x="154.4" y="191.4" width="7.3" height="3.5" fill="#a5a5a5"/>
  <rect x="140.5" y="211.0" width="3.4" height="3.1" fill="#c1c1c1"/>
  <rect x="160.5" y="219.5" width="2.5" height="3.4" fill="#b6b6b6"/>
  <rect x="169.7" y="196.8" width="5.3" height="5.4" fill="#aeaeae"/>
  <rect x="170.4" y="199.6" width="7.2" height="3.9" fill="#6f6f6f"/>
  <rect x="156.4" y="215.3" width="7.4" height="4.9" fill="#d4d4d4"/>
  <rect x="142.6" y="210.2" width="6.1" height="4.5" fill="#7c7c7c"/>
  <rect x="167.2" y="185.7" width="7.9" height="5.9" fill="#9f9f9f"/>
  <rect x="174.0" y="205.6" width="7.9" height="3.7" fill="#d8d8d8"/>
  <rect x="175.0" y="183.5" width="3.5" height="5.6" fill="#9a9a9a"/>
  <rect x="148.9" y="199.2" width="4.4" height="3.3" fill="#dedede"/>
  <rect x="157.5" y="197.2" width="6.7" height="4.5" fill="#9e9e9e"/>
  <rect x="169.2" y="217.3" width="2.9" height="4.4" fill="#e5e5e5"/>
  <rect x="149.1" y="202.7" width="5.4" height="2.4" fill="#949494"/>
  <rect x="157.2" y="205.0" width="4.5" height="3.5" fill="#696969"/>
  <rect x="162.6" y="209.0" width="3.7" height="2.6" fill="#696969"/>
  <rect x="146.7" y="210.6" width="7.3" height="3.3" fill="#e4e4e4"/>
  <rect x="167.9" y="193.4" width="7.4" height="2.1" fill="#8b8b8b"/>
  <rect x="141.8" y="214.2" width="4.9" height="4.8" fill="#767676"/>
  <rect x="167.9" y="191.6" width="7.8" height="3.8" fill="#9e9e9e"/>
  <rect x="146.1" y="214.2" width="5.9" height="2.8" fill="#cbcbcb"/>
  <rect x="168.7" y="200.3" width="6.6" height="5.5" fill="#7a7a7a"/>
  <rect x="143.4" y="214.2" width="3.9" height="4.0" fill="#dfdfdf"/>
  <rect x="172.8" y="214.7" width="2.2" height="2.8" fill="#868686"/>
  <rect x="165.7" y="191.2" width="4.7" height="5.7" fill="#d7d7d7"/>
  <rect x="142.8" y="182.2" width="5.0" height="4.5" fill="#989898"/>
  <rect x="171.5" y="204.6" width="5.6" height="2.7" fill="#949494"/>
  <rect x="168.7" y="206.8" width="3.0" height="5.6" fill="#8b8b8b"/>
  <rect x="160.7" y="219.9" width="4.3" height="2.7" fill="#dbdbdb"/>
  <rect x="148.3" y="196.7" width="5.9" height="4.7" fill="#666666"/>
  <rect x="138.3" y="215.6" width="6.7" height="5.1" fill="#bebebe"/>
  <rect x="147.7" y="214.0" width="5.6" height="2.0" fill="#8e8e8e"/>
  <rect x="153.3" y="195.5" width="7.8" height="4.6" fill="#949494"/>
  <rect x="165.4" y="213.3" width="3.5" height="3.9" fill="#9b9b9b"/>
  <rect x="165.4" y="213.8" width="2.6" height="4.0" fill="#989898"/>
  <rect x="149.4" y="185.2" width="5.9" height="4.4" fill="#6c6c6c"/>
  <rect x="169.1" y="191.0" width="7.9" height="4.6" fill="#c7c7c7"/>
  <rect x="143.5" y="211.5" width="7.4" height="3.2" fill="#e1e1e1"/>
  <rect x="160.3" y="206.0" width="6.8" height="5.2" fill="#c3c3c3"/>
  <rect x="175.6" y="191.0" width="6.3" height="4.6" fill="#9e9e9e"/>
  <rect x="166.1" y="204.4" width="4.3" height="2.1" fill="#7e7e7e"/>
  <rect x="158.1" y="212.5" width="6.4" height="2.9" fill="#e2e2e2"/>
  <rect x="170.1" y="213.8" width="6.0" height="4.0" fill="#dedede"/>
  <rect x="143.2" y="191.5" width="3.1" height="2.4" fill="#d5d5d5"/>
  <rect x="163.4" y="194.5" width="6.6" height="2.7" fill="#707070"/>
  <rect x="150.2" y="211.0" width="4.1" height="5.0" fill="#929292"/>
  <rect x="172.4" y="199.7" width="3.6" height="3.2" fill="#dddddd"/>
  <rect x="140.7" y="214.1" width="5.5" height="5.8" fill="#aaaaaa"/>
  <rect x="149.0" y="183.1" width="7.2" height="3.5" fill="#dbdbdb"/>
  <rect x="240.6" y="207.8" width="3.0" height="2.8" fill="#b7b7b7"/>
  <rect x="265.7" y="213.9" width="5.2" height="3.3" fill="#6b6b6b"/>
  <rect x="258.0" y="190.1" width="6.4" height="2.7" fill="#454545"/>
  <rect x="268.2" y="205.3" width="7.3" height="2.7" fill="#9d9d9d"/>
  <rect x="260.4" y="201.9" width="2.6" height="4.5" fill="#c1c1c1"/>
  <rect x="222.0" y="201.9" width="4.7" height="2.2" fill="#161616"/>
  <rect x="221.3" y="209.4" width="4.3" height="5.3" fill="#848484"/>
  <rect x="234.7" y="193.8" width="3.7" height="4.8" fill="#595959"/>
  <rect x="274.1" y="199.3" width="6.1" height="2.7" fill="#484848"/>
  <rect x="233.0" y="216.3" width="7.1" height="4.4" fill="#c7c7c7"/>
  <rect x="235.8" y="195.4" width="4.4" height="5.6" fill="#bebebe"/>
  <rect x="223.6" y="212.1" width="8.4" height="3.6" fill="#2b2b2b"/>
  <rect x="219.0" y="200.9" width="7.1" height="4.4" fill="#898989"/>
  <rect x="227.4" y="205.2" width="2.3" height="5.5" fill="#1c1c1c"/>
  <rect x="258.0" y="190.6" width="9.0" height="4.6" fill="#909090"/>
  <rect x="251.6" y="204.5" width="4.9" height="3.5" fill="#2f2f2f"/>
  <rect x="230.0" y="209.5" width="6.9" height="4.5" fill="#8b8b8b"/>
  <rect x="216.8" y="214.6" width="3.9" height="4.4" fill="#262626"/>
  <rect x="214.5" y="193.4" width="7.0" height="2.5" fill="#373737"/>
  <rect x="250.3" y="196.2" width="3.4" height="3.1" fill="#929292"/>
  <rect x="247.7" y="196.6" width="4.1" height="2.2" fill="#bbbbbb"/>
  <rect x="262.5" y="219.0" width="4.3" height="2.0" fill="#aaaaaa"/>
  <rect x="212.5" y="206.1" width="6.7" height="2.6" fill="#969696"/>
  <rect x="225.2" y="220.6" width="2.7" height="3.0" fill="#494949"/>
  <rect x="219.8" y="191.2" width="5.2" height="2.4" fill="#484848"/>
  <rect x="265.8" y="192.9" width="7.6" height="3.3" fill="#9c9c9c"/>
  <rect x="263.2" y="194.9" width="2.3" height="5.4" fill="#545454"/>
  <rect x="279.6" y="192.7" width="5.1" height="4.5" fill="#a6a6a6"/>
  <rect x="288.5" y="198.3" width="3.3" height="3.6" fill="#595959"/>
  <rect x="258.2" y="213.0" width="8.0" height="5.2" fill="#282828"/>
  <rect x="283.3" y="195.1" width="6.9" height="2.2" fill="#5e5e5e"/>
  <rect x="261.9" y="195.2" width="6.1" height="5.2" fill="#585858"/>
  <rect x="263.5" y="216.7" width="4.5" height="2.1" fill="#c3c3c3"/>
  <rect x="214.8" y="201.6" width="2.9" height="5.7" fill="#1c1c1c"/>
  <rect x="265.7" y="210.8" width="3.8" height="3.3" fill="#9e9e9e"/>
  <rect x="287.1" y="209.9" width="6.0" height="4.3" fill="#505050"/>
  <rect x="213.0" y="209.3" width="5.7" height="4.8" fill="#404040"/>
  <rect x="237.9" y="214.6" width="4.4" height="4.7" fill="#787878"/>
  <rect x="257.2" y="195.0" width="8.9" height="2.2" fill="#acacac"/>
  <rect x="211.1" y="204.0" width="8.0" height="5.5" fill="#3f3f3f"/>
  <rect x="223.1" y="210.5" width="8.8" height="2.2" fill="#5c5c5c"/>
  <rect x="274.2" y="203.5" width="3.6" height="3.8" fill="#aeaeae"/>
  <rect x="247.2" y="210.6" width="5.1" height="2.5" fill="#262626"/>
  <rect x="205.0" y="192.7" width="4.9" height="4.2" fill="#808080"/>
  <rect x="247.5" y="196.4" width="6.3" height="3.2" fill="#8c8c8c"/>
  <rect x="209.4" y="196.8" width="8.7" height="3.5" fill="#656565"/>
  <rect x="244.8" y="209.4" width="5.9" height="4.5" fill="#949494"/>
  <rect x="224.3" y="199.9" width="2.8" height="5.0" fill="#a9a9a9"/>
  <rect x="247.4" y="211.6" width="8.8" height="3.2" fill="#1c1c1c"/>
  <rect x="267.3" y="212.7" width="3.1" height="2.6" fill="#272727"/>
  <rect x="282.9" y="202.3" width="6.3" height="2.8" fill="#666666"/>
  <rect x="213.9" y="202.1" width="7.5" height="4.9" fill="#bababa"/>
  <rect x="268.4" y="203.4" width="7.9" height="4.4" fill="#8a8a8a"/>
  <rect x="245.6" y="206.7" width="8.7" height="2.5" fill="#1c1c1c"/>
  <rect x="244.3" y="204.6" width="8.5" height="5.4" fill="#b9b9b9"/>
  <rect x="268.4" y="193.8" width="3.2" height="4.3" fill="#595959"/>
  <rect x="247.2" y="201.0" width="6.2" height="5.5" fill="#c4c4c4"/>
  <rect x="227.3" y="217.9" width="8.4" height="5.0" fill="#c2c2c2"/>
  <rect x="240.0" y="212.0" width="5.2" height="2.5" fill="#9a9a9a"/>
  <rect x="278.9" y="210.8" width="4.1" height="4.8" fill="#bcbcbc"/>
  <rect x="235.9" y="168.1" width="7.4" height="2.8" fill="#393939"/>
  <rect x="239.3" y="174.6" width="7.7" height="5.9" fill="#464646"/>
  <rect x="165.8" y="168.8" width="7.9" height="3.3" fill="#444444"/>
  <rect x="207.6" y="173.2" width="7.0" height="4.7" fill="#616161"/>
  <rect x="263.2" y="170.1" width="5.0" height="5.4" fill="#202020"/>
  <rect x="178.2" y="173.2" width="4.0" height="4.7" fill="#2a2a2a"/>
  <rect x="267.5" y="173.7" width="5.0" height="3.0" fill="#353535"/>
  <rect x="261.3" y="165.5" width="8.3" height="2.1" fill="#636363"/>
  <rect x="251.6" y="170.5" width="8.2" height="5.5" fill="#313131"/>
  <rect x="189.3" y="171.8" width="8.5" height="5.2" fill="#686868"/>
  <rect x="285.9" y="167.5" width="5.7" height="5.8" fill="#4a4a4a"/>
  <rect x="238.1" y="174.9" width="3.1" height="3.0" fill="#636363"/>
  <rect x="246.0" y="171.4" width="8.8" height="5.6" fill="#5a5a5a"/>
  <rect x="257.2" y="176.1" width="6.8" height="4.4" fill="#353535"/>
  <rect x="176.3" y="166.1" width="4.2" height="4.7" fill="#474747"/>
  <rect x="227.6" y="165.7" width="5.6" height="3.7" fill="#4c4c4c"/>
  <rect x="249.5" y="166.1" width="4.8" height="3.3" fill="#2a2a2a"/>
  <rect x="280.3" y="173.1" width="5.3" height="2.2" fill="#525252"/>
  <rect x="199.6" y="174.0" width="6.4" height="4.3" fill="#373737"/>
  <rect x="159.6" y="171.2" width="4.5" height="2.7" fill="#3f3f3f"/>
  <rect x="180.6" y="167.1" width="6.8" height="2.4" fill="#383838"/>
  <rect x="255.0" y="171.5" width="5.5" height="2.9" fill="#6d6d6d"/>
  <rect x="151.2" y="171.4" width="8.8" height="5.9" fill="#414141"/>
  <rect x="234.3" y="176.0" width="9.3" height="4.5" fill="#545454"/>
  <rect x="282.1" y="168.4" width="5.2" height="5.7" fill="#494949"/>
  <rect x="265.1" y="168.3" width="5.0" height="5.6" fill="#5e5e5e"/>
  <rect x="274.8" y="166.9" width="6.1" height="2.2" fill="#474747"/>
  <rect x="279.4" y="171.7" width="9.6" height="2.7" fill="#1e1e1e"/>
  <rect x="259.5" y="174.7" width="3.5" height="4.7" fill="#3f3f3f"/>
  <rect x="249.3" y="176.5" width="3.7" height="4.2" fill="#5c5c5c"/>
  <rect x="252.7" y="165.7" width="7.5" height="5.8" fill="#424242"/>
  <rect x="157.6" y="175.6" width="5.3" height="2.4" fill="#4a4a4a"/>
  <rect x="185.7" y="169.5" width="7.0" height="2.9" fill="#505050"/>
  <rect x="243.6" y="172.0" width="6.0" height="2.1" fill="#515151"/>
  <rect x="230.6" y="172.4" width="7.3" height="5.0" fill="#232323"/>
  <rect x="256.6" y="168.4" width="9.5" height="2.4" fill="#242424"/>
  <rect x="204.0" y="172.8" width="8.4" height="3.8" fill="#434343"/>
  <rect x="204.1" y="175.5" width="6.7" height="2.5" fill="#494949"/>
  <rect x="241.6" y="177.2" width="9.7" height="2.6" fill="#5d5d5d"/>
  <rect x="280.0" y="171.5" width="8.1" height="3.5" fill="#4a4a4a"/>
  <rect x="234.2" y="172.0" width="3.9" height="2.0" fill="#696969"/>
  <rect x="276.4" y="168.1" width="5.1" height="5.0" fill="#3f3f3f"/>
  <rect x="172.1" y="166.9" width="7.5" height="4.1" fill="#606060"/>
  <rect x="262.5" y="176.2" width="4.4" height="2.7" fill="#626262"/>
  <rect x="212.5" y="170.1" width="9.5" height="6.0" fill="#353535"/>
  <rect x="252.7" y="171.1" width="3.5" height="2.4" fill="#383838"/>
  <rect x="164.1" y="171.7" width="3.9" height="4.6" fill="#666666"/>
  <rect x="236.1" y="168.0" width="5.2" height="3.8" fill="#4c4c4c"/>
  <rect x="193.7" y="169.8" width="7.0" height="3.5" fill="#1e1e1e"/>
  <rect x="253.8" y="170.2" width="4.7" height="2.9" fill="#616161"/>
 </g>
 <rect x="0" y="98" width="295" height="126" fill="#777" filter="url(#nz)" opacity="0.16"/>
 </g>
 <!-- tower -->
 <g fill="#151515">
  <path d="M150.4 -1 L151.2 2 L153 2.5 L153.2 12 L154 12 L157.5 83 L160 83 L160 89 L159.8 89 L167 110 L169 110 L169 120 L132 120 L132 110 L134 110 L141 89 L140.5 89 L140.5 83 L143.5 83 L146.8 12 L147.6 12 L147.8 2.5 L149.6 2 Z"/>
  <path d="M132 120 L143 120 L136 141 L124 141 Z"/>
  <path d="M158 120 L169 120 L175 141 L164 141 Z"/>
  <path d="M140 120 L161 120 L161 124 Q150.5 118 140 124 Z"/>
 </g>
 <path d="M148 91 L153 91 L156.5 110 L144.5 110Z" fill="#b0b0b0"/>
 
 <g fill="#9c9c9c">
  <rect x="148.6" y="22" width="0.9" height="3"/><rect x="151.3" y="22" width="0.9" height="3"/>
  <rect x="148.3" y="30" width="1.1" height="3"/><rect x="151.4" y="30" width="1.1" height="3"/>
  <rect x="148" y="38" width="1.3" height="3"/><rect x="151.5" y="38" width="1.3" height="3"/>
  <rect x="147.7" y="46" width="1.5" height="3.5"/><rect x="151.6" y="46" width="1.5" height="3.5"/>
  <rect x="147.3" y="54" width="1.7" height="3.5"/><rect x="151.8" y="54" width="1.7" height="3.5"/>
  <rect x="146.9" y="62" width="2" height="4"/><rect x="151.9" y="62" width="2" height="4"/>
  <rect x="146.5" y="70" width="2.2" height="4"/><rect x="152.1" y="70" width="2.2" height="4"/>
  <rect x="146.1" y="77" width="2.4" height="4"/><rect x="152.3" y="77" width="2.4" height="4"/>
 </g>
 </g>
</svg>

<div id="bar">
<div style="position:absolute;left:11px;top:7px;width:211px;height:2px;background:#e6e6e6"></div>
<div style="position:absolute;left:222px;top:7px;width:1050px;height:2px;background:#b4b4b4"></div>
<div style="position:absolute;left:11px;top:3px;width:2px;height:10px;background:#e6e6e6"></div>
<div style="position:absolute;left:22px;top:4px;width:2px;height:8px;background:#e6e6e6"></div>
<div style="position:absolute;left:30px;top:4px;width:2px;height:8px;background:#e6e6e6"></div>
<div style="position:absolute;left:38px;top:4px;width:2px;height:8px;background:#e6e6e6"></div>
<div style="position:absolute;left:72px;top:4px;width:2px;height:8px;background:#e6e6e6"></div>
<div style="position:absolute;left:103px;top:4px;width:2px;height:8px;background:#e6e6e6"></div>
<div style="position:absolute;left:134px;top:4px;width:2px;height:8px;background:#e6e6e6"></div>
<div style="position:absolute;left:173px;top:4px;width:2px;height:8px;background:#e6e6e6"></div>
<div style="position:absolute;left:215px;top:4px;width:2px;height:8px;background:#e6e6e6"></div>
<div style="position:absolute;left:250px;top:4px;width:2px;height:8px;background:#b4b4b4"></div>
<div style="position:absolute;left:290px;top:4px;width:2px;height:8px;background:#b4b4b4"></div>
<div style="position:absolute;left:339px;top:4px;width:2px;height:8px;background:#b4b4b4"></div>
<div style="position:absolute;left:374px;top:4px;width:2px;height:8px;background:#b4b4b4"></div>
<div style="position:absolute;left:409px;top:4px;width:2px;height:8px;background:#b4b4b4"></div>
<div style="position:absolute;left:435px;top:4px;width:2px;height:8px;background:#b4b4b4"></div>
<div style="position:absolute;left:482px;top:4px;width:2px;height:8px;background:#b4b4b4"></div>
<div style="position:absolute;left:524px;top:4px;width:2px;height:8px;background:#b4b4b4"></div>
<div style="position:absolute;left:547px;top:4px;width:2px;height:8px;background:#b4b4b4"></div>
<div style="position:absolute;left:578px;top:4px;width:2px;height:8px;background:#b4b4b4"></div>
<div style="position:absolute;left:617px;top:4px;width:2px;height:8px;background:#b4b4b4"></div>
<div style="position:absolute;left:664px;top:4px;width:2px;height:8px;background:#b4b4b4"></div>
<div style="position:absolute;left:690px;top:4px;width:2px;height:8px;background:#b4b4b4"></div>
<div style="position:absolute;left:1215px;top:4px;width:2px;height:8px;background:#b4b4b4"></div>
<div style="position:absolute;left:1270px;top:3px;width:2px;height:10px;background:#b4b4b4"></div>
</div>
<div style="position:absolute;left:0;top:974px;width:1282px;height:2px;background:#2e2e2e"></div>
<div id="lb"></div>
<div id="rb"></div>
</div>
</body></html>
